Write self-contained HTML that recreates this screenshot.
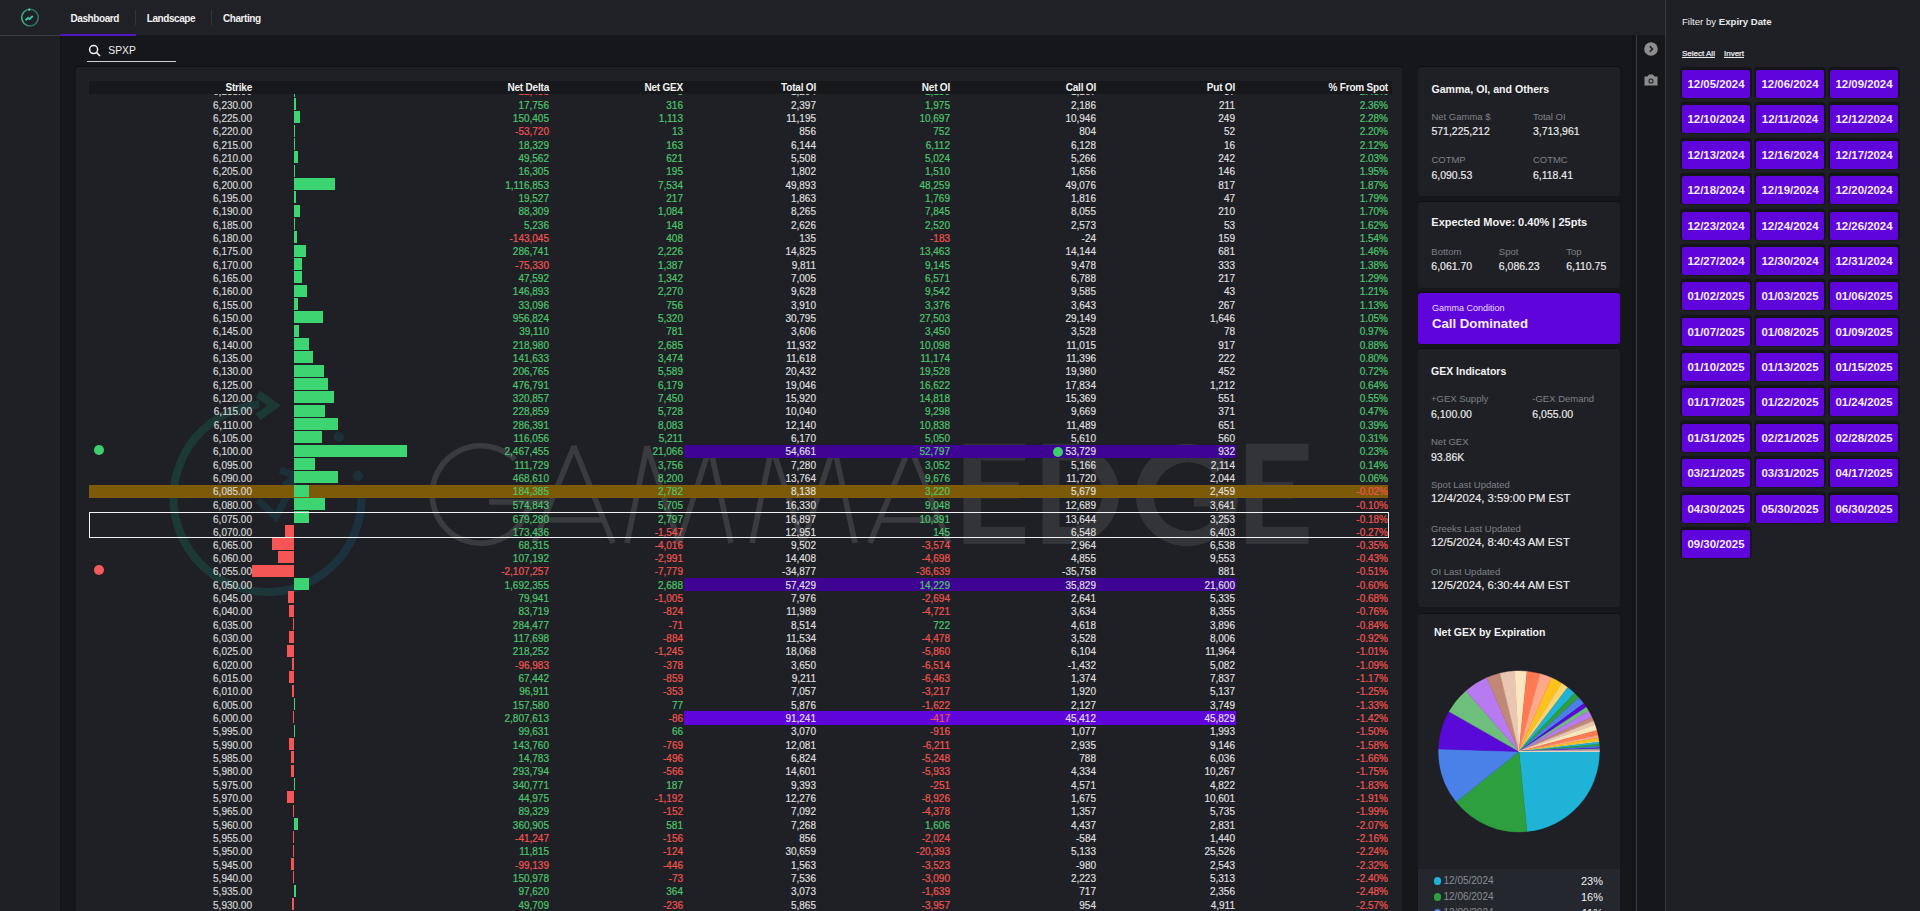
<!DOCTYPE html>
<html><head><meta charset="utf-8">
<style>
*{box-sizing:border-box;margin:0;padding:0}
html,body{width:1920px;height:911px;overflow:hidden;background:#16171b;font-family:'Liberation Sans', sans-serif;}
.a{position:absolute}
.t{position:absolute;white-space:nowrap;line-height:1}
.r{position:absolute;white-space:nowrap;text-align:right;-webkit-text-stroke:0.2px currentColor}
.btn{position:absolute;width:68px;height:28px;background:#5f05dc;border-radius:2px;color:#f4ecff;font-size:11.4px;font-weight:bold;text-align:center;line-height:28px;box-shadow:0 -1.4px 0 1.8px #141519}
</style></head><body>

<div class="a" style="left:0;top:0;width:1665px;height:35px;background:#202126"></div>
<div class="a" style="left:0;top:35px;width:60px;height:876px;background:#1f2025"></div>
<div class="a" style="left:0;top:35px;width:60px;height:1px;background:#3c3d42"></div>
<div class="a" style="left:60px;top:36px;width:2px;height:875px;background:#131418"></div>
<div class="a" style="left:60px;top:33.8px;width:76px;height:2px;background:#4f17bc"></div>
<svg class="a" style="left:18px;top:6px" width="24" height="24" viewBox="0 0 24 24">
<defs><linearGradient id="lg" x1="0" y1="0" x2="1" y2="0"><stop offset="0" stop-color="#3bbf86"/><stop offset="0.55" stop-color="#1f7a5e"/><stop offset="1" stop-color="#3e6f78"/></linearGradient></defs>
<circle cx="12" cy="11.6" r="8.3" fill="none" stroke="url(#lg)" stroke-width="1.5"/>
<path d="M7.5 14.2 L10 12 L11.5 13 L14.8 10" fill="none" stroke="#3fc2a0" stroke-width="1.9"/>
<circle cx="11.3" cy="3.7" r="1.1" fill="#5fd3a8"/>
</svg>
<div class="t" style="left:70.50px;top:13.54px;font-size:10px;font-weight:bold;color:#f0f0f0;letter-spacing:-0.42px">Dashboard</div>
<div class="a" style="left:135px;top:10px;width:1px;height:15px;background:#34353a"></div>
<div class="t" style="left:146.70px;top:13.54px;font-size:10px;font-weight:bold;color:#f0f0f0;letter-spacing:-0.42px">Landscape</div>
<div class="a" style="left:211px;top:10px;width:1px;height:15px;background:#34353a"></div>
<div class="t" style="left:222.90px;top:13.54px;font-size:10px;font-weight:bold;color:#f0f0f0;letter-spacing:-0.42px">Charting</div>
<svg class="a" style="left:88px;top:44px" width="14" height="14" viewBox="0 0 14 14">
<circle cx="5.6" cy="5.6" r="4" fill="none" stroke="#f0f0f0" stroke-width="1.5"/>
<path d="M8.5 8.5 L12 12" stroke="#f0f0f0" stroke-width="1.6"/>
</svg>
<div class="t" style="left:108.30px;top:46.08px;font-size:10.3px;color:#f0f0f0">SPXP</div>
<div class="a" style="left:86.5px;top:60.5px;width:89.5px;height:1.5px;background:#cfcfcf"></div>
<div class="a" style="left:76px;top:67px;width:1326px;height:860px;background:#1f2025;border-radius:3px;box-shadow:0 -1px 1px rgba(0,0,0,.35)"></div>
<svg class="a" style="left:0;top:0" width="1920" height="911" viewBox="0 0 1920 911"><defs><linearGradient id="rg" x1="0" y1="0" x2="1" y2="0"><stop offset="0" stop-color="#1c3a33"/><stop offset="1" stop-color="#1c3140"/></linearGradient></defs><path d="M 259.3 404.4 A 94 94 0 1 0 361.3 491.4" fill="none" stroke="url(#rg)" stroke-width="8"/><path d="M 258 394 L 274 405.5 L 258 417" fill="none" stroke="#1c3a33" stroke-width="8" stroke-linejoin="miter"/><circle cx="338.7" cy="437" r="5" fill="#1c3038"/><circle cx="358" cy="475.6" r="5.2" fill="#1c3038"/><path d="M 258 500 L 276 517 L 294 482 M 280 470 L 296 476 L 284 486" fill="none" stroke="#1c3038" stroke-width="7"/><path d="M 514.9 459.4 A 48.8 48.8 0 1 0 529.2 502.1 M 549 502 L 489 502" fill="none" stroke="#3a3b3f" stroke-width="5.6"/><path d="M 534 543 L 574 446.5 L 613 543 M 543 520 L 604 520" fill="none" stroke="#3a3b3f" stroke-width="5.6" stroke-linejoin="bevel"/><path d="M 627 543 L 647 446.5 L 679 543 L 710 446.5 L 731 543" fill="none" stroke="#3a3b3f" stroke-width="5.6" stroke-linejoin="bevel"/><path d="M 752 543 L 772 446.5 L 803 543 L 834 446.5 L 855 543" fill="none" stroke="#3a3b3f" stroke-width="5.6" stroke-linejoin="bevel"/><path d="M 870 543 L 910 446.5 L 949 543 M 879 520 L 940 520" fill="none" stroke="#3a3b3f" stroke-width="5.6" stroke-linejoin="bevel"/><path d="M 963.5 443.7 H 1025 V 460.5 H 981 V 482 H 1019 V 498.6 H 981 V 527 H 1025 V 544 H 963.5 Z" fill="#333438"/><path d="M 1042.5 443.7 H 1069 A 50.15 50.15 0 0 1 1069 544 H 1042.5 Z M 1059.5 460.5 V 527 H 1069 A 33.25 33.25 0 0 0 1069 460.5 Z" fill="#333438" fill-rule="evenodd"/><path d="M 1227.3 463.5 A 51.2 51.2 0 1 0 1237.9 500.4 L 1237.9 490 L 1194 490 L 1194 506.5 L 1221.1 506.5 A 34.3 34.3 0 1 1 1214.0 473.9 Z" fill="#333438"/><path d="M 1245.8 443.7 H 1308.5 V 460.5 H 1262.5 V 482 H 1293 V 498.6 H 1262.5 V 527 H 1308.5 V 544 H 1245.8 Z" fill="#333438"/></svg>
<div class="a" style="left:89px;top:80.5px;width:1303px;height:13.5px;background:#17181b"></div>
<div class="t" style="right:1668.00px;top:82.73px;font-size:10px;font-weight:bold;color:#f0f0f0;letter-spacing:-0.2px">Strike</div>
<div class="t" style="right:1371.00px;top:82.73px;font-size:10px;font-weight:bold;color:#f0f0f0;letter-spacing:-0.2px">Net Delta</div>
<div class="t" style="right:1237.00px;top:82.73px;font-size:10px;font-weight:bold;color:#f0f0f0;letter-spacing:-0.2px">Net GEX</div>
<div class="t" style="right:1104.00px;top:82.73px;font-size:10px;font-weight:bold;color:#f0f0f0;letter-spacing:-0.2px">Total OI</div>
<div class="t" style="right:970.00px;top:82.73px;font-size:10px;font-weight:bold;color:#f0f0f0;letter-spacing:-0.2px">Net OI</div>
<div class="t" style="right:824.00px;top:82.73px;font-size:10px;font-weight:bold;color:#f0f0f0;letter-spacing:-0.2px">Call OI</div>
<div class="t" style="right:685.00px;top:82.73px;font-size:10px;font-weight:bold;color:#f0f0f0;letter-spacing:-0.2px">Put OI</div>
<div class="t" style="right:532.00px;top:82.73px;font-size:10px;font-weight:bold;color:#f0f0f0;letter-spacing:-0.2px">% From Spot</div>
<div class="a" style="left:76px;top:94px;width:1325px;height:817px;overflow:hidden">
<div class="a" style="left:218px;top:-9.33px;width:1.00px;height:12.1px;background:#3dd572"></div>
<div class="r" style="right:1149px;top:-8.73px;height:13.333px;line-height:13.333px;font-size:10px;color:#d4d4d4">6,235.00</div>
<div class="r" style="right:852px;top:-8.73px;height:13.333px;line-height:13.333px;font-size:10px;color:#ef5350">-12,488</div>
<div class="r" style="right:718px;top:-8.73px;height:13.333px;line-height:13.333px;font-size:10px;color:#4cc56d">5</div>
<div class="r" style="right:585px;top:-8.73px;height:13.333px;line-height:13.333px;font-size:10px;color:#dedede">1,204</div>
<div class="r" style="right:451px;top:-8.73px;height:13.333px;line-height:13.333px;font-size:10px;color:#4cc56d">1,130</div>
<div class="r" style="right:305px;top:-8.73px;height:13.333px;line-height:13.333px;font-size:10px;color:#dedede">1,167</div>
<div class="r" style="right:166px;top:-8.73px;height:13.333px;line-height:13.333px;font-size:10px;color:#dedede">37</div>
<div class="r" style="right:13px;top:-8.73px;height:13.333px;line-height:13.333px;font-size:10px;color:#4cc56d">2.45%</div>
<div class="a" style="left:218px;top:4.00px;width:2.09px;height:12.1px;background:#3dd572"></div>
<div class="r" style="right:1149px;top:4.60px;height:13.333px;line-height:13.333px;font-size:10px;color:#d4d4d4">6,230.00</div>
<div class="r" style="right:852px;top:4.60px;height:13.333px;line-height:13.333px;font-size:10px;color:#4cc56d">17,756</div>
<div class="r" style="right:718px;top:4.60px;height:13.333px;line-height:13.333px;font-size:10px;color:#4cc56d">316</div>
<div class="r" style="right:585px;top:4.60px;height:13.333px;line-height:13.333px;font-size:10px;color:#dedede">2,397</div>
<div class="r" style="right:451px;top:4.60px;height:13.333px;line-height:13.333px;font-size:10px;color:#4cc56d">1,975</div>
<div class="r" style="right:305px;top:4.60px;height:13.333px;line-height:13.333px;font-size:10px;color:#dedede">2,186</div>
<div class="r" style="right:166px;top:4.60px;height:13.333px;line-height:13.333px;font-size:10px;color:#dedede">211</div>
<div class="r" style="right:13px;top:4.60px;height:13.333px;line-height:13.333px;font-size:10px;color:#4cc56d">2.36%</div>
<div class="a" style="left:218px;top:17.33px;width:6.37px;height:12.1px;background:#3dd572"></div>
<div class="r" style="right:1149px;top:17.93px;height:13.333px;line-height:13.333px;font-size:10px;color:#d4d4d4">6,225.00</div>
<div class="r" style="right:852px;top:17.93px;height:13.333px;line-height:13.333px;font-size:10px;color:#4cc56d">150,405</div>
<div class="r" style="right:718px;top:17.93px;height:13.333px;line-height:13.333px;font-size:10px;color:#4cc56d">1,113</div>
<div class="r" style="right:585px;top:17.93px;height:13.333px;line-height:13.333px;font-size:10px;color:#dedede">11,195</div>
<div class="r" style="right:451px;top:17.93px;height:13.333px;line-height:13.333px;font-size:10px;color:#4cc56d">10,697</div>
<div class="r" style="right:305px;top:17.93px;height:13.333px;line-height:13.333px;font-size:10px;color:#dedede">10,946</div>
<div class="r" style="right:166px;top:17.93px;height:13.333px;line-height:13.333px;font-size:10px;color:#dedede">249</div>
<div class="r" style="right:13px;top:17.93px;height:13.333px;line-height:13.333px;font-size:10px;color:#4cc56d">2.28%</div>
<div class="a" style="left:218px;top:30.67px;width:1.00px;height:12.1px;background:#3dd572"></div>
<div class="r" style="right:1149px;top:31.27px;height:13.333px;line-height:13.333px;font-size:10px;color:#d4d4d4">6,220.00</div>
<div class="r" style="right:852px;top:31.27px;height:13.333px;line-height:13.333px;font-size:10px;color:#ef5350">-53,720</div>
<div class="r" style="right:718px;top:31.27px;height:13.333px;line-height:13.333px;font-size:10px;color:#4cc56d">13</div>
<div class="r" style="right:585px;top:31.27px;height:13.333px;line-height:13.333px;font-size:10px;color:#dedede">856</div>
<div class="r" style="right:451px;top:31.27px;height:13.333px;line-height:13.333px;font-size:10px;color:#4cc56d">752</div>
<div class="r" style="right:305px;top:31.27px;height:13.333px;line-height:13.333px;font-size:10px;color:#dedede">804</div>
<div class="r" style="right:166px;top:31.27px;height:13.333px;line-height:13.333px;font-size:10px;color:#dedede">52</div>
<div class="r" style="right:13px;top:31.27px;height:13.333px;line-height:13.333px;font-size:10px;color:#4cc56d">2.20%</div>
<div class="a" style="left:218px;top:44.00px;width:1.27px;height:12.1px;background:#3dd572"></div>
<div class="r" style="right:1149px;top:44.60px;height:13.333px;line-height:13.333px;font-size:10px;color:#d4d4d4">6,215.00</div>
<div class="r" style="right:852px;top:44.60px;height:13.333px;line-height:13.333px;font-size:10px;color:#4cc56d">18,329</div>
<div class="r" style="right:718px;top:44.60px;height:13.333px;line-height:13.333px;font-size:10px;color:#4cc56d">163</div>
<div class="r" style="right:585px;top:44.60px;height:13.333px;line-height:13.333px;font-size:10px;color:#dedede">6,144</div>
<div class="r" style="right:451px;top:44.60px;height:13.333px;line-height:13.333px;font-size:10px;color:#4cc56d">6,112</div>
<div class="r" style="right:305px;top:44.60px;height:13.333px;line-height:13.333px;font-size:10px;color:#dedede">6,128</div>
<div class="r" style="right:166px;top:44.60px;height:13.333px;line-height:13.333px;font-size:10px;color:#dedede">16</div>
<div class="r" style="right:13px;top:44.60px;height:13.333px;line-height:13.333px;font-size:10px;color:#4cc56d">2.12%</div>
<div class="a" style="left:218px;top:57.33px;width:3.73px;height:12.1px;background:#3dd572"></div>
<div class="r" style="right:1149px;top:57.93px;height:13.333px;line-height:13.333px;font-size:10px;color:#d4d4d4">6,210.00</div>
<div class="r" style="right:852px;top:57.93px;height:13.333px;line-height:13.333px;font-size:10px;color:#4cc56d">49,562</div>
<div class="r" style="right:718px;top:57.93px;height:13.333px;line-height:13.333px;font-size:10px;color:#4cc56d">621</div>
<div class="r" style="right:585px;top:57.93px;height:13.333px;line-height:13.333px;font-size:10px;color:#dedede">5,508</div>
<div class="r" style="right:451px;top:57.93px;height:13.333px;line-height:13.333px;font-size:10px;color:#4cc56d">5,024</div>
<div class="r" style="right:305px;top:57.93px;height:13.333px;line-height:13.333px;font-size:10px;color:#dedede">5,266</div>
<div class="r" style="right:166px;top:57.93px;height:13.333px;line-height:13.333px;font-size:10px;color:#dedede">242</div>
<div class="r" style="right:13px;top:57.93px;height:13.333px;line-height:13.333px;font-size:10px;color:#4cc56d">2.03%</div>
<div class="a" style="left:218px;top:70.66px;width:1.45px;height:12.1px;background:#3dd572"></div>
<div class="r" style="right:1149px;top:71.26px;height:13.333px;line-height:13.333px;font-size:10px;color:#d4d4d4">6,205.00</div>
<div class="r" style="right:852px;top:71.26px;height:13.333px;line-height:13.333px;font-size:10px;color:#4cc56d">16,305</div>
<div class="r" style="right:718px;top:71.26px;height:13.333px;line-height:13.333px;font-size:10px;color:#4cc56d">195</div>
<div class="r" style="right:585px;top:71.26px;height:13.333px;line-height:13.333px;font-size:10px;color:#dedede">1,802</div>
<div class="r" style="right:451px;top:71.26px;height:13.333px;line-height:13.333px;font-size:10px;color:#4cc56d">1,510</div>
<div class="r" style="right:305px;top:71.26px;height:13.333px;line-height:13.333px;font-size:10px;color:#dedede">1,656</div>
<div class="r" style="right:166px;top:71.26px;height:13.333px;line-height:13.333px;font-size:10px;color:#dedede">146</div>
<div class="r" style="right:13px;top:71.26px;height:13.333px;line-height:13.333px;font-size:10px;color:#4cc56d">1.95%</div>
<div class="a" style="left:218px;top:84.00px;width:40.78px;height:12.1px;background:#3dd572"></div>
<div class="r" style="right:1149px;top:84.60px;height:13.333px;line-height:13.333px;font-size:10px;color:#d4d4d4">6,200.00</div>
<div class="r" style="right:852px;top:84.60px;height:13.333px;line-height:13.333px;font-size:10px;color:#4cc56d">1,116,853</div>
<div class="r" style="right:718px;top:84.60px;height:13.333px;line-height:13.333px;font-size:10px;color:#4cc56d">7,534</div>
<div class="r" style="right:585px;top:84.60px;height:13.333px;line-height:13.333px;font-size:10px;color:#dedede">49,893</div>
<div class="r" style="right:451px;top:84.60px;height:13.333px;line-height:13.333px;font-size:10px;color:#4cc56d">48,259</div>
<div class="r" style="right:305px;top:84.60px;height:13.333px;line-height:13.333px;font-size:10px;color:#dedede">49,076</div>
<div class="r" style="right:166px;top:84.60px;height:13.333px;line-height:13.333px;font-size:10px;color:#dedede">817</div>
<div class="r" style="right:13px;top:84.60px;height:13.333px;line-height:13.333px;font-size:10px;color:#4cc56d">1.87%</div>
<div class="a" style="left:218px;top:97.33px;width:1.56px;height:12.1px;background:#3dd572"></div>
<div class="r" style="right:1149px;top:97.93px;height:13.333px;line-height:13.333px;font-size:10px;color:#d4d4d4">6,195.00</div>
<div class="r" style="right:852px;top:97.93px;height:13.333px;line-height:13.333px;font-size:10px;color:#4cc56d">19,527</div>
<div class="r" style="right:718px;top:97.93px;height:13.333px;line-height:13.333px;font-size:10px;color:#4cc56d">217</div>
<div class="r" style="right:585px;top:97.93px;height:13.333px;line-height:13.333px;font-size:10px;color:#dedede">1,863</div>
<div class="r" style="right:451px;top:97.93px;height:13.333px;line-height:13.333px;font-size:10px;color:#4cc56d">1,769</div>
<div class="r" style="right:305px;top:97.93px;height:13.333px;line-height:13.333px;font-size:10px;color:#dedede">1,816</div>
<div class="r" style="right:166px;top:97.93px;height:13.333px;line-height:13.333px;font-size:10px;color:#dedede">47</div>
<div class="r" style="right:13px;top:97.93px;height:13.333px;line-height:13.333px;font-size:10px;color:#4cc56d">1.79%</div>
<div class="a" style="left:218px;top:110.66px;width:6.21px;height:12.1px;background:#3dd572"></div>
<div class="r" style="right:1149px;top:111.26px;height:13.333px;line-height:13.333px;font-size:10px;color:#d4d4d4">6,190.00</div>
<div class="r" style="right:852px;top:111.26px;height:13.333px;line-height:13.333px;font-size:10px;color:#4cc56d">88,309</div>
<div class="r" style="right:718px;top:111.26px;height:13.333px;line-height:13.333px;font-size:10px;color:#4cc56d">1,084</div>
<div class="r" style="right:585px;top:111.26px;height:13.333px;line-height:13.333px;font-size:10px;color:#dedede">8,265</div>
<div class="r" style="right:451px;top:111.26px;height:13.333px;line-height:13.333px;font-size:10px;color:#4cc56d">7,845</div>
<div class="r" style="right:305px;top:111.26px;height:13.333px;line-height:13.333px;font-size:10px;color:#dedede">8,055</div>
<div class="r" style="right:166px;top:111.26px;height:13.333px;line-height:13.333px;font-size:10px;color:#dedede">210</div>
<div class="r" style="right:13px;top:111.26px;height:13.333px;line-height:13.333px;font-size:10px;color:#4cc56d">1.70%</div>
<div class="a" style="left:218px;top:124.00px;width:1.19px;height:12.1px;background:#3dd572"></div>
<div class="r" style="right:1149px;top:124.60px;height:13.333px;line-height:13.333px;font-size:10px;color:#d4d4d4">6,185.00</div>
<div class="r" style="right:852px;top:124.60px;height:13.333px;line-height:13.333px;font-size:10px;color:#4cc56d">5,236</div>
<div class="r" style="right:718px;top:124.60px;height:13.333px;line-height:13.333px;font-size:10px;color:#4cc56d">148</div>
<div class="r" style="right:585px;top:124.60px;height:13.333px;line-height:13.333px;font-size:10px;color:#dedede">2,626</div>
<div class="r" style="right:451px;top:124.60px;height:13.333px;line-height:13.333px;font-size:10px;color:#4cc56d">2,520</div>
<div class="r" style="right:305px;top:124.60px;height:13.333px;line-height:13.333px;font-size:10px;color:#dedede">2,573</div>
<div class="r" style="right:166px;top:124.60px;height:13.333px;line-height:13.333px;font-size:10px;color:#dedede">53</div>
<div class="r" style="right:13px;top:124.60px;height:13.333px;line-height:13.333px;font-size:10px;color:#4cc56d">1.62%</div>
<div class="a" style="left:218px;top:137.33px;width:2.59px;height:12.1px;background:#3dd572"></div>
<div class="r" style="right:1149px;top:137.93px;height:13.333px;line-height:13.333px;font-size:10px;color:#d4d4d4">6,180.00</div>
<div class="r" style="right:852px;top:137.93px;height:13.333px;line-height:13.333px;font-size:10px;color:#ef5350">-143,045</div>
<div class="r" style="right:718px;top:137.93px;height:13.333px;line-height:13.333px;font-size:10px;color:#4cc56d">408</div>
<div class="r" style="right:585px;top:137.93px;height:13.333px;line-height:13.333px;font-size:10px;color:#dedede">135</div>
<div class="r" style="right:451px;top:137.93px;height:13.333px;line-height:13.333px;font-size:10px;color:#ef5350">-183</div>
<div class="r" style="right:305px;top:137.93px;height:13.333px;line-height:13.333px;font-size:10px;color:#dedede">-24</div>
<div class="r" style="right:166px;top:137.93px;height:13.333px;line-height:13.333px;font-size:10px;color:#dedede">159</div>
<div class="r" style="right:13px;top:137.93px;height:13.333px;line-height:13.333px;font-size:10px;color:#4cc56d">1.54%</div>
<div class="a" style="left:218px;top:150.66px;width:12.33px;height:12.1px;background:#3dd572"></div>
<div class="r" style="right:1149px;top:151.26px;height:13.333px;line-height:13.333px;font-size:10px;color:#d4d4d4">6,175.00</div>
<div class="r" style="right:852px;top:151.26px;height:13.333px;line-height:13.333px;font-size:10px;color:#4cc56d">286,741</div>
<div class="r" style="right:718px;top:151.26px;height:13.333px;line-height:13.333px;font-size:10px;color:#4cc56d">2,226</div>
<div class="r" style="right:585px;top:151.26px;height:13.333px;line-height:13.333px;font-size:10px;color:#dedede">14,825</div>
<div class="r" style="right:451px;top:151.26px;height:13.333px;line-height:13.333px;font-size:10px;color:#4cc56d">13,463</div>
<div class="r" style="right:305px;top:151.26px;height:13.333px;line-height:13.333px;font-size:10px;color:#dedede">14,144</div>
<div class="r" style="right:166px;top:151.26px;height:13.333px;line-height:13.333px;font-size:10px;color:#dedede">681</div>
<div class="r" style="right:13px;top:151.26px;height:13.333px;line-height:13.333px;font-size:10px;color:#4cc56d">1.46%</div>
<div class="a" style="left:218px;top:164.00px;width:7.83px;height:12.1px;background:#3dd572"></div>
<div class="r" style="right:1149px;top:164.60px;height:13.333px;line-height:13.333px;font-size:10px;color:#d4d4d4">6,170.00</div>
<div class="r" style="right:852px;top:164.60px;height:13.333px;line-height:13.333px;font-size:10px;color:#ef5350">-75,330</div>
<div class="r" style="right:718px;top:164.60px;height:13.333px;line-height:13.333px;font-size:10px;color:#4cc56d">1,387</div>
<div class="r" style="right:585px;top:164.60px;height:13.333px;line-height:13.333px;font-size:10px;color:#dedede">9,811</div>
<div class="r" style="right:451px;top:164.60px;height:13.333px;line-height:13.333px;font-size:10px;color:#4cc56d">9,145</div>
<div class="r" style="right:305px;top:164.60px;height:13.333px;line-height:13.333px;font-size:10px;color:#dedede">9,478</div>
<div class="r" style="right:166px;top:164.60px;height:13.333px;line-height:13.333px;font-size:10px;color:#dedede">333</div>
<div class="r" style="right:13px;top:164.60px;height:13.333px;line-height:13.333px;font-size:10px;color:#4cc56d">1.38%</div>
<div class="a" style="left:218px;top:177.33px;width:7.59px;height:12.1px;background:#3dd572"></div>
<div class="r" style="right:1149px;top:177.93px;height:13.333px;line-height:13.333px;font-size:10px;color:#d4d4d4">6,165.00</div>
<div class="r" style="right:852px;top:177.93px;height:13.333px;line-height:13.333px;font-size:10px;color:#4cc56d">47,592</div>
<div class="r" style="right:718px;top:177.93px;height:13.333px;line-height:13.333px;font-size:10px;color:#4cc56d">1,342</div>
<div class="r" style="right:585px;top:177.93px;height:13.333px;line-height:13.333px;font-size:10px;color:#dedede">7,005</div>
<div class="r" style="right:451px;top:177.93px;height:13.333px;line-height:13.333px;font-size:10px;color:#4cc56d">6,571</div>
<div class="r" style="right:305px;top:177.93px;height:13.333px;line-height:13.333px;font-size:10px;color:#dedede">6,788</div>
<div class="r" style="right:166px;top:177.93px;height:13.333px;line-height:13.333px;font-size:10px;color:#dedede">217</div>
<div class="r" style="right:13px;top:177.93px;height:13.333px;line-height:13.333px;font-size:10px;color:#4cc56d">1.29%</div>
<div class="a" style="left:218px;top:190.66px;width:12.57px;height:12.1px;background:#3dd572"></div>
<div class="r" style="right:1149px;top:191.26px;height:13.333px;line-height:13.333px;font-size:10px;color:#d4d4d4">6,160.00</div>
<div class="r" style="right:852px;top:191.26px;height:13.333px;line-height:13.333px;font-size:10px;color:#4cc56d">146,893</div>
<div class="r" style="right:718px;top:191.26px;height:13.333px;line-height:13.333px;font-size:10px;color:#4cc56d">2,270</div>
<div class="r" style="right:585px;top:191.26px;height:13.333px;line-height:13.333px;font-size:10px;color:#dedede">9,628</div>
<div class="r" style="right:451px;top:191.26px;height:13.333px;line-height:13.333px;font-size:10px;color:#4cc56d">9,542</div>
<div class="r" style="right:305px;top:191.26px;height:13.333px;line-height:13.333px;font-size:10px;color:#dedede">9,585</div>
<div class="r" style="right:166px;top:191.26px;height:13.333px;line-height:13.333px;font-size:10px;color:#dedede">43</div>
<div class="r" style="right:13px;top:191.26px;height:13.333px;line-height:13.333px;font-size:10px;color:#4cc56d">1.21%</div>
<div class="a" style="left:218px;top:204.00px;width:4.45px;height:12.1px;background:#3dd572"></div>
<div class="r" style="right:1149px;top:204.60px;height:13.333px;line-height:13.333px;font-size:10px;color:#d4d4d4">6,155.00</div>
<div class="r" style="right:852px;top:204.60px;height:13.333px;line-height:13.333px;font-size:10px;color:#4cc56d">33,096</div>
<div class="r" style="right:718px;top:204.60px;height:13.333px;line-height:13.333px;font-size:10px;color:#4cc56d">756</div>
<div class="r" style="right:585px;top:204.60px;height:13.333px;line-height:13.333px;font-size:10px;color:#dedede">3,910</div>
<div class="r" style="right:451px;top:204.60px;height:13.333px;line-height:13.333px;font-size:10px;color:#4cc56d">3,376</div>
<div class="r" style="right:305px;top:204.60px;height:13.333px;line-height:13.333px;font-size:10px;color:#dedede">3,643</div>
<div class="r" style="right:166px;top:204.60px;height:13.333px;line-height:13.333px;font-size:10px;color:#dedede">267</div>
<div class="r" style="right:13px;top:204.60px;height:13.333px;line-height:13.333px;font-size:10px;color:#4cc56d">1.13%</div>
<div class="a" style="left:218px;top:217.33px;width:28.92px;height:12.1px;background:#3dd572"></div>
<div class="r" style="right:1149px;top:217.93px;height:13.333px;line-height:13.333px;font-size:10px;color:#d4d4d4">6,150.00</div>
<div class="r" style="right:852px;top:217.93px;height:13.333px;line-height:13.333px;font-size:10px;color:#4cc56d">956,824</div>
<div class="r" style="right:718px;top:217.93px;height:13.333px;line-height:13.333px;font-size:10px;color:#4cc56d">5,320</div>
<div class="r" style="right:585px;top:217.93px;height:13.333px;line-height:13.333px;font-size:10px;color:#dedede">30,795</div>
<div class="r" style="right:451px;top:217.93px;height:13.333px;line-height:13.333px;font-size:10px;color:#4cc56d">27,503</div>
<div class="r" style="right:305px;top:217.93px;height:13.333px;line-height:13.333px;font-size:10px;color:#dedede">29,149</div>
<div class="r" style="right:166px;top:217.93px;height:13.333px;line-height:13.333px;font-size:10px;color:#dedede">1,646</div>
<div class="r" style="right:13px;top:217.93px;height:13.333px;line-height:13.333px;font-size:10px;color:#4cc56d">1.05%</div>
<div class="a" style="left:218px;top:230.66px;width:4.59px;height:12.1px;background:#3dd572"></div>
<div class="r" style="right:1149px;top:231.26px;height:13.333px;line-height:13.333px;font-size:10px;color:#d4d4d4">6,145.00</div>
<div class="r" style="right:852px;top:231.26px;height:13.333px;line-height:13.333px;font-size:10px;color:#4cc56d">39,110</div>
<div class="r" style="right:718px;top:231.26px;height:13.333px;line-height:13.333px;font-size:10px;color:#4cc56d">781</div>
<div class="r" style="right:585px;top:231.26px;height:13.333px;line-height:13.333px;font-size:10px;color:#dedede">3,606</div>
<div class="r" style="right:451px;top:231.26px;height:13.333px;line-height:13.333px;font-size:10px;color:#4cc56d">3,450</div>
<div class="r" style="right:305px;top:231.26px;height:13.333px;line-height:13.333px;font-size:10px;color:#dedede">3,528</div>
<div class="r" style="right:166px;top:231.26px;height:13.333px;line-height:13.333px;font-size:10px;color:#dedede">78</div>
<div class="r" style="right:13px;top:231.26px;height:13.333px;line-height:13.333px;font-size:10px;color:#4cc56d">0.97%</div>
<div class="a" style="left:218px;top:243.99px;width:14.79px;height:12.1px;background:#3dd572"></div>
<div class="r" style="right:1149px;top:244.59px;height:13.333px;line-height:13.333px;font-size:10px;color:#d4d4d4">6,140.00</div>
<div class="r" style="right:852px;top:244.59px;height:13.333px;line-height:13.333px;font-size:10px;color:#4cc56d">218,980</div>
<div class="r" style="right:718px;top:244.59px;height:13.333px;line-height:13.333px;font-size:10px;color:#4cc56d">2,685</div>
<div class="r" style="right:585px;top:244.59px;height:13.333px;line-height:13.333px;font-size:10px;color:#dedede">11,932</div>
<div class="r" style="right:451px;top:244.59px;height:13.333px;line-height:13.333px;font-size:10px;color:#4cc56d">10,098</div>
<div class="r" style="right:305px;top:244.59px;height:13.333px;line-height:13.333px;font-size:10px;color:#dedede">11,015</div>
<div class="r" style="right:166px;top:244.59px;height:13.333px;line-height:13.333px;font-size:10px;color:#dedede">917</div>
<div class="r" style="right:13px;top:244.59px;height:13.333px;line-height:13.333px;font-size:10px;color:#4cc56d">0.88%</div>
<div class="a" style="left:218px;top:257.33px;width:19.02px;height:12.1px;background:#3dd572"></div>
<div class="r" style="right:1149px;top:257.93px;height:13.333px;line-height:13.333px;font-size:10px;color:#d4d4d4">6,135.00</div>
<div class="r" style="right:852px;top:257.93px;height:13.333px;line-height:13.333px;font-size:10px;color:#4cc56d">141,633</div>
<div class="r" style="right:718px;top:257.93px;height:13.333px;line-height:13.333px;font-size:10px;color:#4cc56d">3,474</div>
<div class="r" style="right:585px;top:257.93px;height:13.333px;line-height:13.333px;font-size:10px;color:#dedede">11,618</div>
<div class="r" style="right:451px;top:257.93px;height:13.333px;line-height:13.333px;font-size:10px;color:#4cc56d">11,174</div>
<div class="r" style="right:305px;top:257.93px;height:13.333px;line-height:13.333px;font-size:10px;color:#dedede">11,396</div>
<div class="r" style="right:166px;top:257.93px;height:13.333px;line-height:13.333px;font-size:10px;color:#dedede">222</div>
<div class="r" style="right:13px;top:257.93px;height:13.333px;line-height:13.333px;font-size:10px;color:#4cc56d">0.80%</div>
<div class="a" style="left:218px;top:270.66px;width:30.36px;height:12.1px;background:#3dd572"></div>
<div class="r" style="right:1149px;top:271.26px;height:13.333px;line-height:13.333px;font-size:10px;color:#d4d4d4">6,130.00</div>
<div class="r" style="right:852px;top:271.26px;height:13.333px;line-height:13.333px;font-size:10px;color:#4cc56d">206,765</div>
<div class="r" style="right:718px;top:271.26px;height:13.333px;line-height:13.333px;font-size:10px;color:#4cc56d">5,589</div>
<div class="r" style="right:585px;top:271.26px;height:13.333px;line-height:13.333px;font-size:10px;color:#dedede">20,432</div>
<div class="r" style="right:451px;top:271.26px;height:13.333px;line-height:13.333px;font-size:10px;color:#4cc56d">19,528</div>
<div class="r" style="right:305px;top:271.26px;height:13.333px;line-height:13.333px;font-size:10px;color:#dedede">19,980</div>
<div class="r" style="right:166px;top:271.26px;height:13.333px;line-height:13.333px;font-size:10px;color:#dedede">452</div>
<div class="r" style="right:13px;top:271.26px;height:13.333px;line-height:13.333px;font-size:10px;color:#4cc56d">0.72%</div>
<div class="a" style="left:218px;top:283.99px;width:33.52px;height:12.1px;background:#3dd572"></div>
<div class="r" style="right:1149px;top:284.59px;height:13.333px;line-height:13.333px;font-size:10px;color:#d4d4d4">6,125.00</div>
<div class="r" style="right:852px;top:284.59px;height:13.333px;line-height:13.333px;font-size:10px;color:#4cc56d">476,791</div>
<div class="r" style="right:718px;top:284.59px;height:13.333px;line-height:13.333px;font-size:10px;color:#4cc56d">6,179</div>
<div class="r" style="right:585px;top:284.59px;height:13.333px;line-height:13.333px;font-size:10px;color:#dedede">19,046</div>
<div class="r" style="right:451px;top:284.59px;height:13.333px;line-height:13.333px;font-size:10px;color:#4cc56d">16,622</div>
<div class="r" style="right:305px;top:284.59px;height:13.333px;line-height:13.333px;font-size:10px;color:#dedede">17,834</div>
<div class="r" style="right:166px;top:284.59px;height:13.333px;line-height:13.333px;font-size:10px;color:#dedede">1,212</div>
<div class="r" style="right:13px;top:284.59px;height:13.333px;line-height:13.333px;font-size:10px;color:#4cc56d">0.64%</div>
<div class="a" style="left:218px;top:297.33px;width:40.33px;height:12.1px;background:#3dd572"></div>
<div class="r" style="right:1149px;top:297.93px;height:13.333px;line-height:13.333px;font-size:10px;color:#d4d4d4">6,120.00</div>
<div class="r" style="right:852px;top:297.93px;height:13.333px;line-height:13.333px;font-size:10px;color:#4cc56d">320,857</div>
<div class="r" style="right:718px;top:297.93px;height:13.333px;line-height:13.333px;font-size:10px;color:#4cc56d">7,450</div>
<div class="r" style="right:585px;top:297.93px;height:13.333px;line-height:13.333px;font-size:10px;color:#dedede">15,920</div>
<div class="r" style="right:451px;top:297.93px;height:13.333px;line-height:13.333px;font-size:10px;color:#4cc56d">14,818</div>
<div class="r" style="right:305px;top:297.93px;height:13.333px;line-height:13.333px;font-size:10px;color:#dedede">15,369</div>
<div class="r" style="right:166px;top:297.93px;height:13.333px;line-height:13.333px;font-size:10px;color:#dedede">551</div>
<div class="r" style="right:13px;top:297.93px;height:13.333px;line-height:13.333px;font-size:10px;color:#4cc56d">0.55%</div>
<div class="a" style="left:218px;top:310.66px;width:31.10px;height:12.1px;background:#3dd572"></div>
<div class="r" style="right:1149px;top:311.26px;height:13.333px;line-height:13.333px;font-size:10px;color:#d4d4d4">6,115.00</div>
<div class="r" style="right:852px;top:311.26px;height:13.333px;line-height:13.333px;font-size:10px;color:#4cc56d">228,859</div>
<div class="r" style="right:718px;top:311.26px;height:13.333px;line-height:13.333px;font-size:10px;color:#4cc56d">5,728</div>
<div class="r" style="right:585px;top:311.26px;height:13.333px;line-height:13.333px;font-size:10px;color:#dedede">10,040</div>
<div class="r" style="right:451px;top:311.26px;height:13.333px;line-height:13.333px;font-size:10px;color:#4cc56d">9,298</div>
<div class="r" style="right:305px;top:311.26px;height:13.333px;line-height:13.333px;font-size:10px;color:#dedede">9,669</div>
<div class="r" style="right:166px;top:311.26px;height:13.333px;line-height:13.333px;font-size:10px;color:#dedede">371</div>
<div class="r" style="right:13px;top:311.26px;height:13.333px;line-height:13.333px;font-size:10px;color:#4cc56d">0.47%</div>
<div class="a" style="left:218px;top:323.99px;width:43.72px;height:12.1px;background:#3dd572"></div>
<div class="r" style="right:1149px;top:324.59px;height:13.333px;line-height:13.333px;font-size:10px;color:#d4d4d4">6,110.00</div>
<div class="r" style="right:852px;top:324.59px;height:13.333px;line-height:13.333px;font-size:10px;color:#4cc56d">286,391</div>
<div class="r" style="right:718px;top:324.59px;height:13.333px;line-height:13.333px;font-size:10px;color:#4cc56d">8,083</div>
<div class="r" style="right:585px;top:324.59px;height:13.333px;line-height:13.333px;font-size:10px;color:#dedede">12,140</div>
<div class="r" style="right:451px;top:324.59px;height:13.333px;line-height:13.333px;font-size:10px;color:#4cc56d">10,838</div>
<div class="r" style="right:305px;top:324.59px;height:13.333px;line-height:13.333px;font-size:10px;color:#dedede">11,489</div>
<div class="r" style="right:166px;top:324.59px;height:13.333px;line-height:13.333px;font-size:10px;color:#dedede">651</div>
<div class="r" style="right:13px;top:324.59px;height:13.333px;line-height:13.333px;font-size:10px;color:#4cc56d">0.39%</div>
<div class="a" style="left:218px;top:337.32px;width:28.33px;height:12.1px;background:#3dd572"></div>
<div class="r" style="right:1149px;top:337.92px;height:13.333px;line-height:13.333px;font-size:10px;color:#d4d4d4">6,105.00</div>
<div class="r" style="right:852px;top:337.92px;height:13.333px;line-height:13.333px;font-size:10px;color:#4cc56d">116,056</div>
<div class="r" style="right:718px;top:337.92px;height:13.333px;line-height:13.333px;font-size:10px;color:#4cc56d">5,211</div>
<div class="r" style="right:585px;top:337.92px;height:13.333px;line-height:13.333px;font-size:10px;color:#dedede">6,170</div>
<div class="r" style="right:451px;top:337.92px;height:13.333px;line-height:13.333px;font-size:10px;color:#4cc56d">5,050</div>
<div class="r" style="right:305px;top:337.92px;height:13.333px;line-height:13.333px;font-size:10px;color:#dedede">5,610</div>
<div class="r" style="right:166px;top:337.92px;height:13.333px;line-height:13.333px;font-size:10px;color:#dedede">560</div>
<div class="r" style="right:13px;top:337.92px;height:13.333px;line-height:13.333px;font-size:10px;color:#4cc56d">0.31%</div>
<div class="a" style="left:608px;top:350.66px;width:552px;height:13.333px;background:#3f0494"></div>
<div class="a" style="left:218px;top:350.66px;width:113.31px;height:12.1px;background:#3dd572"></div>
<div class="r" style="right:1149px;top:351.26px;height:13.333px;line-height:13.333px;font-size:10px;color:#d4d4d4">6,100.00</div>
<div class="r" style="right:852px;top:351.26px;height:13.333px;line-height:13.333px;font-size:10px;color:#4cc56d">2,467,455</div>
<div class="r" style="right:718px;top:351.26px;height:13.333px;line-height:13.333px;font-size:10px;color:#4cc56d">21,066</div>
<div class="r" style="right:585px;top:351.26px;height:13.333px;line-height:13.333px;font-size:10px;color:#dedede">54,661</div>
<div class="r" style="right:451px;top:351.26px;height:13.333px;line-height:13.333px;font-size:10px;color:#4cc56d">52,797</div>
<div class="r" style="right:305px;top:351.26px;height:13.333px;line-height:13.333px;font-size:10px;color:#dedede">53,729</div>
<div class="r" style="right:166px;top:351.26px;height:13.333px;line-height:13.333px;font-size:10px;color:#dedede">932</div>
<div class="r" style="right:13px;top:351.26px;height:13.333px;line-height:13.333px;font-size:10px;color:#4cc56d">0.23%</div>
<div class="a" style="left:218px;top:363.99px;width:20.53px;height:12.1px;background:#3dd572"></div>
<div class="r" style="right:1149px;top:364.59px;height:13.333px;line-height:13.333px;font-size:10px;color:#d4d4d4">6,095.00</div>
<div class="r" style="right:852px;top:364.59px;height:13.333px;line-height:13.333px;font-size:10px;color:#4cc56d">111,729</div>
<div class="r" style="right:718px;top:364.59px;height:13.333px;line-height:13.333px;font-size:10px;color:#4cc56d">3,756</div>
<div class="r" style="right:585px;top:364.59px;height:13.333px;line-height:13.333px;font-size:10px;color:#dedede">7,280</div>
<div class="r" style="right:451px;top:364.59px;height:13.333px;line-height:13.333px;font-size:10px;color:#4cc56d">3,052</div>
<div class="r" style="right:305px;top:364.59px;height:13.333px;line-height:13.333px;font-size:10px;color:#dedede">5,166</div>
<div class="r" style="right:166px;top:364.59px;height:13.333px;line-height:13.333px;font-size:10px;color:#dedede">2,114</div>
<div class="r" style="right:13px;top:364.59px;height:13.333px;line-height:13.333px;font-size:10px;color:#4cc56d">0.14%</div>
<div class="a" style="left:218px;top:377.32px;width:44.35px;height:12.1px;background:#3dd572"></div>
<div class="r" style="right:1149px;top:377.92px;height:13.333px;line-height:13.333px;font-size:10px;color:#d4d4d4">6,090.00</div>
<div class="r" style="right:852px;top:377.92px;height:13.333px;line-height:13.333px;font-size:10px;color:#4cc56d">468,610</div>
<div class="r" style="right:718px;top:377.92px;height:13.333px;line-height:13.333px;font-size:10px;color:#4cc56d">8,200</div>
<div class="r" style="right:585px;top:377.92px;height:13.333px;line-height:13.333px;font-size:10px;color:#dedede">13,764</div>
<div class="r" style="right:451px;top:377.92px;height:13.333px;line-height:13.333px;font-size:10px;color:#4cc56d">9,676</div>
<div class="r" style="right:305px;top:377.92px;height:13.333px;line-height:13.333px;font-size:10px;color:#dedede">11,720</div>
<div class="r" style="right:166px;top:377.92px;height:13.333px;line-height:13.333px;font-size:10px;color:#dedede">2,044</div>
<div class="r" style="right:13px;top:377.92px;height:13.333px;line-height:13.333px;font-size:10px;color:#4cc56d">0.06%</div>
<div class="a" style="left:12.799999999999997px;top:390.96px;width:1299.2px;height:13px;background:#7d5a08"></div>
<div class="a" style="left:218px;top:390.66px;width:15.31px;height:12.1px;background:#3dd572"></div>
<div class="r" style="right:1149px;top:391.26px;height:13.333px;line-height:13.333px;font-size:10px;color:#d4d4d4">6,085.00</div>
<div class="r" style="right:852px;top:391.26px;height:13.333px;line-height:13.333px;font-size:10px;color:#4cc56d">184,385</div>
<div class="r" style="right:718px;top:391.26px;height:13.333px;line-height:13.333px;font-size:10px;color:#4cc56d">2,782</div>
<div class="r" style="right:585px;top:391.26px;height:13.333px;line-height:13.333px;font-size:10px;color:#dedede">8,138</div>
<div class="r" style="right:451px;top:391.26px;height:13.333px;line-height:13.333px;font-size:10px;color:#4cc56d">3,220</div>
<div class="r" style="right:305px;top:391.26px;height:13.333px;line-height:13.333px;font-size:10px;color:#dedede">5,679</div>
<div class="r" style="right:166px;top:391.26px;height:13.333px;line-height:13.333px;font-size:10px;color:#dedede">2,459</div>
<div class="r" style="right:13px;top:391.26px;height:13.333px;line-height:13.333px;font-size:10px;color:#ef5350">-0.02%</div>
<div class="a" style="left:218px;top:403.99px;width:30.98px;height:12.1px;background:#3dd572"></div>
<div class="r" style="right:1149px;top:404.59px;height:13.333px;line-height:13.333px;font-size:10px;color:#d4d4d4">6,080.00</div>
<div class="r" style="right:852px;top:404.59px;height:13.333px;line-height:13.333px;font-size:10px;color:#4cc56d">574,843</div>
<div class="r" style="right:718px;top:404.59px;height:13.333px;line-height:13.333px;font-size:10px;color:#4cc56d">5,705</div>
<div class="r" style="right:585px;top:404.59px;height:13.333px;line-height:13.333px;font-size:10px;color:#dedede">16,330</div>
<div class="r" style="right:451px;top:404.59px;height:13.333px;line-height:13.333px;font-size:10px;color:#4cc56d">9,048</div>
<div class="r" style="right:305px;top:404.59px;height:13.333px;line-height:13.333px;font-size:10px;color:#dedede">12,689</div>
<div class="r" style="right:166px;top:404.59px;height:13.333px;line-height:13.333px;font-size:10px;color:#dedede">3,641</div>
<div class="r" style="right:13px;top:404.59px;height:13.333px;line-height:13.333px;font-size:10px;color:#ef5350">-0.10%</div>
<div class="a" style="left:218px;top:417.32px;width:15.39px;height:12.1px;background:#3dd572"></div>
<div class="r" style="right:1149px;top:419.12px;height:13.333px;line-height:13.333px;font-size:10px;color:#d4d4d4">6,075.00</div>
<div class="r" style="right:852px;top:419.12px;height:13.333px;line-height:13.333px;font-size:10px;color:#4cc56d">679,280</div>
<div class="r" style="right:718px;top:419.12px;height:13.333px;line-height:13.333px;font-size:10px;color:#4cc56d">2,797</div>
<div class="r" style="right:585px;top:419.12px;height:13.333px;line-height:13.333px;font-size:10px;color:#dedede">16,897</div>
<div class="r" style="right:451px;top:419.12px;height:13.333px;line-height:13.333px;font-size:10px;color:#4cc56d">10,391</div>
<div class="r" style="right:305px;top:419.12px;height:13.333px;line-height:13.333px;font-size:10px;color:#dedede">13,644</div>
<div class="r" style="right:166px;top:419.12px;height:13.333px;line-height:13.333px;font-size:10px;color:#dedede">3,253</div>
<div class="r" style="right:13px;top:419.12px;height:13.333px;line-height:13.333px;font-size:10px;color:#ef5350">-0.18%</div>
<div class="a" style="left:209.31px;top:430.66px;width:8.69px;height:12.1px;background:#f45656"></div>
<div class="r" style="right:1149px;top:432.46px;height:13.333px;line-height:13.333px;font-size:10px;color:#d4d4d4">6,070.00</div>
<div class="r" style="right:852px;top:432.46px;height:13.333px;line-height:13.333px;font-size:10px;color:#4cc56d">173,436</div>
<div class="r" style="right:718px;top:432.46px;height:13.333px;line-height:13.333px;font-size:10px;color:#ef5350">-1,547</div>
<div class="r" style="right:585px;top:432.46px;height:13.333px;line-height:13.333px;font-size:10px;color:#dedede">12,951</div>
<div class="r" style="right:451px;top:432.46px;height:13.333px;line-height:13.333px;font-size:10px;color:#4cc56d">145</div>
<div class="r" style="right:305px;top:432.46px;height:13.333px;line-height:13.333px;font-size:10px;color:#dedede">6,548</div>
<div class="r" style="right:166px;top:432.46px;height:13.333px;line-height:13.333px;font-size:10px;color:#dedede">6,403</div>
<div class="r" style="right:13px;top:432.46px;height:13.333px;line-height:13.333px;font-size:10px;color:#ef5350">-0.27%</div>
<div class="a" style="left:196.07px;top:443.99px;width:21.93px;height:12.1px;background:#f45656"></div>
<div class="r" style="right:1149px;top:444.59px;height:13.333px;line-height:13.333px;font-size:10px;color:#d4d4d4">6,065.00</div>
<div class="r" style="right:852px;top:444.59px;height:13.333px;line-height:13.333px;font-size:10px;color:#4cc56d">68,315</div>
<div class="r" style="right:718px;top:444.59px;height:13.333px;line-height:13.333px;font-size:10px;color:#ef5350">-4,016</div>
<div class="r" style="right:585px;top:444.59px;height:13.333px;line-height:13.333px;font-size:10px;color:#dedede">9,502</div>
<div class="r" style="right:451px;top:444.59px;height:13.333px;line-height:13.333px;font-size:10px;color:#ef5350">-3,574</div>
<div class="r" style="right:305px;top:444.59px;height:13.333px;line-height:13.333px;font-size:10px;color:#dedede">2,964</div>
<div class="r" style="right:166px;top:444.59px;height:13.333px;line-height:13.333px;font-size:10px;color:#dedede">6,538</div>
<div class="r" style="right:13px;top:444.59px;height:13.333px;line-height:13.333px;font-size:10px;color:#ef5350">-0.35%</div>
<div class="a" style="left:201.57px;top:457.32px;width:16.43px;height:12.1px;background:#f45656"></div>
<div class="r" style="right:1149px;top:457.92px;height:13.333px;line-height:13.333px;font-size:10px;color:#d4d4d4">6,060.00</div>
<div class="r" style="right:852px;top:457.92px;height:13.333px;line-height:13.333px;font-size:10px;color:#4cc56d">107,192</div>
<div class="r" style="right:718px;top:457.92px;height:13.333px;line-height:13.333px;font-size:10px;color:#ef5350">-2,991</div>
<div class="r" style="right:585px;top:457.92px;height:13.333px;line-height:13.333px;font-size:10px;color:#dedede">14,408</div>
<div class="r" style="right:451px;top:457.92px;height:13.333px;line-height:13.333px;font-size:10px;color:#ef5350">-4,698</div>
<div class="r" style="right:305px;top:457.92px;height:13.333px;line-height:13.333px;font-size:10px;color:#dedede">4,855</div>
<div class="r" style="right:166px;top:457.92px;height:13.333px;line-height:13.333px;font-size:10px;color:#dedede">9,553</div>
<div class="r" style="right:13px;top:457.92px;height:13.333px;line-height:13.333px;font-size:10px;color:#ef5350">-0.43%</div>
<div class="a" style="left:175.90px;top:470.65px;width:42.10px;height:12.1px;background:#f45656"></div>
<div class="r" style="right:1149px;top:471.25px;height:13.333px;line-height:13.333px;font-size:10px;color:#d4d4d4">6,055.00</div>
<div class="r" style="right:852px;top:471.25px;height:13.333px;line-height:13.333px;font-size:10px;color:#ef5350">-2,107,257</div>
<div class="r" style="right:718px;top:471.25px;height:13.333px;line-height:13.333px;font-size:10px;color:#ef5350">-7,779</div>
<div class="r" style="right:585px;top:471.25px;height:13.333px;line-height:13.333px;font-size:10px;color:#dedede">-34,877</div>
<div class="r" style="right:451px;top:471.25px;height:13.333px;line-height:13.333px;font-size:10px;color:#ef5350">-36,639</div>
<div class="r" style="right:305px;top:471.25px;height:13.333px;line-height:13.333px;font-size:10px;color:#dedede">-35,758</div>
<div class="r" style="right:166px;top:471.25px;height:13.333px;line-height:13.333px;font-size:10px;color:#dedede">881</div>
<div class="r" style="right:13px;top:471.25px;height:13.333px;line-height:13.333px;font-size:10px;color:#ef5350">-0.51%</div>
<div class="a" style="left:608px;top:483.99px;width:552px;height:13.333px;background:#3f0494"></div>
<div class="a" style="left:218px;top:483.99px;width:14.81px;height:12.1px;background:#3dd572"></div>
<div class="r" style="right:1149px;top:484.59px;height:13.333px;line-height:13.333px;font-size:10px;color:#d4d4d4">6,050.00</div>
<div class="r" style="right:852px;top:484.59px;height:13.333px;line-height:13.333px;font-size:10px;color:#4cc56d">1,692,355</div>
<div class="r" style="right:718px;top:484.59px;height:13.333px;line-height:13.333px;font-size:10px;color:#4cc56d">2,688</div>
<div class="r" style="right:585px;top:484.59px;height:13.333px;line-height:13.333px;font-size:10px;color:#dedede">57,429</div>
<div class="r" style="right:451px;top:484.59px;height:13.333px;line-height:13.333px;font-size:10px;color:#4cc56d">14,229</div>
<div class="r" style="right:305px;top:484.59px;height:13.333px;line-height:13.333px;font-size:10px;color:#dedede">35,829</div>
<div class="r" style="right:166px;top:484.59px;height:13.333px;line-height:13.333px;font-size:10px;color:#dedede">21,600</div>
<div class="r" style="right:13px;top:484.59px;height:13.333px;line-height:13.333px;font-size:10px;color:#ef5350">-0.60%</div>
<div class="a" style="left:212.21px;top:497.32px;width:5.79px;height:12.1px;background:#f45656"></div>
<div class="r" style="right:1149px;top:497.92px;height:13.333px;line-height:13.333px;font-size:10px;color:#d4d4d4">6,045.00</div>
<div class="r" style="right:852px;top:497.92px;height:13.333px;line-height:13.333px;font-size:10px;color:#4cc56d">79,941</div>
<div class="r" style="right:718px;top:497.92px;height:13.333px;line-height:13.333px;font-size:10px;color:#ef5350">-1,005</div>
<div class="r" style="right:585px;top:497.92px;height:13.333px;line-height:13.333px;font-size:10px;color:#dedede">7,976</div>
<div class="r" style="right:451px;top:497.92px;height:13.333px;line-height:13.333px;font-size:10px;color:#ef5350">-2,694</div>
<div class="r" style="right:305px;top:497.92px;height:13.333px;line-height:13.333px;font-size:10px;color:#dedede">2,641</div>
<div class="r" style="right:166px;top:497.92px;height:13.333px;line-height:13.333px;font-size:10px;color:#dedede">5,335</div>
<div class="r" style="right:13px;top:497.92px;height:13.333px;line-height:13.333px;font-size:10px;color:#ef5350">-0.68%</div>
<div class="a" style="left:213.18px;top:510.65px;width:4.82px;height:12.1px;background:#f45656"></div>
<div class="r" style="right:1149px;top:511.25px;height:13.333px;line-height:13.333px;font-size:10px;color:#d4d4d4">6,040.00</div>
<div class="r" style="right:852px;top:511.25px;height:13.333px;line-height:13.333px;font-size:10px;color:#4cc56d">83,719</div>
<div class="r" style="right:718px;top:511.25px;height:13.333px;line-height:13.333px;font-size:10px;color:#ef5350">-824</div>
<div class="r" style="right:585px;top:511.25px;height:13.333px;line-height:13.333px;font-size:10px;color:#dedede">11,989</div>
<div class="r" style="right:451px;top:511.25px;height:13.333px;line-height:13.333px;font-size:10px;color:#ef5350">-4,721</div>
<div class="r" style="right:305px;top:511.25px;height:13.333px;line-height:13.333px;font-size:10px;color:#dedede">3,634</div>
<div class="r" style="right:166px;top:511.25px;height:13.333px;line-height:13.333px;font-size:10px;color:#dedede">8,355</div>
<div class="r" style="right:13px;top:511.25px;height:13.333px;line-height:13.333px;font-size:10px;color:#ef5350">-0.76%</div>
<div class="a" style="left:217.00px;top:523.99px;width:1.00px;height:12.1px;background:#f45656"></div>
<div class="r" style="right:1149px;top:524.59px;height:13.333px;line-height:13.333px;font-size:10px;color:#d4d4d4">6,035.00</div>
<div class="r" style="right:852px;top:524.59px;height:13.333px;line-height:13.333px;font-size:10px;color:#4cc56d">284,477</div>
<div class="r" style="right:718px;top:524.59px;height:13.333px;line-height:13.333px;font-size:10px;color:#ef5350">-71</div>
<div class="r" style="right:585px;top:524.59px;height:13.333px;line-height:13.333px;font-size:10px;color:#dedede">8,514</div>
<div class="r" style="right:451px;top:524.59px;height:13.333px;line-height:13.333px;font-size:10px;color:#4cc56d">722</div>
<div class="r" style="right:305px;top:524.59px;height:13.333px;line-height:13.333px;font-size:10px;color:#dedede">4,618</div>
<div class="r" style="right:166px;top:524.59px;height:13.333px;line-height:13.333px;font-size:10px;color:#dedede">3,896</div>
<div class="r" style="right:13px;top:524.59px;height:13.333px;line-height:13.333px;font-size:10px;color:#ef5350">-0.84%</div>
<div class="a" style="left:212.86px;top:537.32px;width:5.14px;height:12.1px;background:#f45656"></div>
<div class="r" style="right:1149px;top:537.92px;height:13.333px;line-height:13.333px;font-size:10px;color:#d4d4d4">6,030.00</div>
<div class="r" style="right:852px;top:537.92px;height:13.333px;line-height:13.333px;font-size:10px;color:#4cc56d">117,698</div>
<div class="r" style="right:718px;top:537.92px;height:13.333px;line-height:13.333px;font-size:10px;color:#ef5350">-884</div>
<div class="r" style="right:585px;top:537.92px;height:13.333px;line-height:13.333px;font-size:10px;color:#dedede">11,534</div>
<div class="r" style="right:451px;top:537.92px;height:13.333px;line-height:13.333px;font-size:10px;color:#ef5350">-4,478</div>
<div class="r" style="right:305px;top:537.92px;height:13.333px;line-height:13.333px;font-size:10px;color:#dedede">3,528</div>
<div class="r" style="right:166px;top:537.92px;height:13.333px;line-height:13.333px;font-size:10px;color:#dedede">8,006</div>
<div class="r" style="right:13px;top:537.92px;height:13.333px;line-height:13.333px;font-size:10px;color:#ef5350">-0.92%</div>
<div class="a" style="left:210.93px;top:550.65px;width:7.07px;height:12.1px;background:#f45656"></div>
<div class="r" style="right:1149px;top:551.25px;height:13.333px;line-height:13.333px;font-size:10px;color:#d4d4d4">6,025.00</div>
<div class="r" style="right:852px;top:551.25px;height:13.333px;line-height:13.333px;font-size:10px;color:#4cc56d">218,252</div>
<div class="r" style="right:718px;top:551.25px;height:13.333px;line-height:13.333px;font-size:10px;color:#ef5350">-1,245</div>
<div class="r" style="right:585px;top:551.25px;height:13.333px;line-height:13.333px;font-size:10px;color:#dedede">18,068</div>
<div class="r" style="right:451px;top:551.25px;height:13.333px;line-height:13.333px;font-size:10px;color:#ef5350">-5,860</div>
<div class="r" style="right:305px;top:551.25px;height:13.333px;line-height:13.333px;font-size:10px;color:#dedede">6,104</div>
<div class="r" style="right:166px;top:551.25px;height:13.333px;line-height:13.333px;font-size:10px;color:#dedede">11,964</div>
<div class="r" style="right:13px;top:551.25px;height:13.333px;line-height:13.333px;font-size:10px;color:#ef5350">-1.01%</div>
<div class="a" style="left:215.57px;top:563.99px;width:2.43px;height:12.1px;background:#f45656"></div>
<div class="r" style="right:1149px;top:564.59px;height:13.333px;line-height:13.333px;font-size:10px;color:#d4d4d4">6,020.00</div>
<div class="r" style="right:852px;top:564.59px;height:13.333px;line-height:13.333px;font-size:10px;color:#ef5350">-96,983</div>
<div class="r" style="right:718px;top:564.59px;height:13.333px;line-height:13.333px;font-size:10px;color:#ef5350">-378</div>
<div class="r" style="right:585px;top:564.59px;height:13.333px;line-height:13.333px;font-size:10px;color:#dedede">3,650</div>
<div class="r" style="right:451px;top:564.59px;height:13.333px;line-height:13.333px;font-size:10px;color:#ef5350">-6,514</div>
<div class="r" style="right:305px;top:564.59px;height:13.333px;line-height:13.333px;font-size:10px;color:#dedede">-1,432</div>
<div class="r" style="right:166px;top:564.59px;height:13.333px;line-height:13.333px;font-size:10px;color:#dedede">5,082</div>
<div class="r" style="right:13px;top:564.59px;height:13.333px;line-height:13.333px;font-size:10px;color:#ef5350">-1.09%</div>
<div class="a" style="left:213.00px;top:577.32px;width:5.00px;height:12.1px;background:#f45656"></div>
<div class="r" style="right:1149px;top:577.92px;height:13.333px;line-height:13.333px;font-size:10px;color:#d4d4d4">6,015.00</div>
<div class="r" style="right:852px;top:577.92px;height:13.333px;line-height:13.333px;font-size:10px;color:#4cc56d">67,442</div>
<div class="r" style="right:718px;top:577.92px;height:13.333px;line-height:13.333px;font-size:10px;color:#ef5350">-859</div>
<div class="r" style="right:585px;top:577.92px;height:13.333px;line-height:13.333px;font-size:10px;color:#dedede">9,211</div>
<div class="r" style="right:451px;top:577.92px;height:13.333px;line-height:13.333px;font-size:10px;color:#ef5350">-6,463</div>
<div class="r" style="right:305px;top:577.92px;height:13.333px;line-height:13.333px;font-size:10px;color:#dedede">1,374</div>
<div class="r" style="right:166px;top:577.92px;height:13.333px;line-height:13.333px;font-size:10px;color:#dedede">7,837</div>
<div class="r" style="right:13px;top:577.92px;height:13.333px;line-height:13.333px;font-size:10px;color:#ef5350">-1.17%</div>
<div class="a" style="left:215.71px;top:590.65px;width:2.29px;height:12.1px;background:#f45656"></div>
<div class="r" style="right:1149px;top:591.25px;height:13.333px;line-height:13.333px;font-size:10px;color:#d4d4d4">6,010.00</div>
<div class="r" style="right:852px;top:591.25px;height:13.333px;line-height:13.333px;font-size:10px;color:#4cc56d">96,911</div>
<div class="r" style="right:718px;top:591.25px;height:13.333px;line-height:13.333px;font-size:10px;color:#ef5350">-353</div>
<div class="r" style="right:585px;top:591.25px;height:13.333px;line-height:13.333px;font-size:10px;color:#dedede">7,057</div>
<div class="r" style="right:451px;top:591.25px;height:13.333px;line-height:13.333px;font-size:10px;color:#ef5350">-3,217</div>
<div class="r" style="right:305px;top:591.25px;height:13.333px;line-height:13.333px;font-size:10px;color:#dedede">1,920</div>
<div class="r" style="right:166px;top:591.25px;height:13.333px;line-height:13.333px;font-size:10px;color:#dedede">5,137</div>
<div class="r" style="right:13px;top:591.25px;height:13.333px;line-height:13.333px;font-size:10px;color:#ef5350">-1.25%</div>
<div class="a" style="left:218px;top:603.99px;width:1.00px;height:12.1px;background:#3dd572"></div>
<div class="r" style="right:1149px;top:604.59px;height:13.333px;line-height:13.333px;font-size:10px;color:#d4d4d4">6,005.00</div>
<div class="r" style="right:852px;top:604.59px;height:13.333px;line-height:13.333px;font-size:10px;color:#4cc56d">157,580</div>
<div class="r" style="right:718px;top:604.59px;height:13.333px;line-height:13.333px;font-size:10px;color:#4cc56d">77</div>
<div class="r" style="right:585px;top:604.59px;height:13.333px;line-height:13.333px;font-size:10px;color:#dedede">5,876</div>
<div class="r" style="right:451px;top:604.59px;height:13.333px;line-height:13.333px;font-size:10px;color:#ef5350">-1,622</div>
<div class="r" style="right:305px;top:604.59px;height:13.333px;line-height:13.333px;font-size:10px;color:#dedede">2,127</div>
<div class="r" style="right:166px;top:604.59px;height:13.333px;line-height:13.333px;font-size:10px;color:#dedede">3,749</div>
<div class="r" style="right:13px;top:604.59px;height:13.333px;line-height:13.333px;font-size:10px;color:#ef5350">-1.33%</div>
<div class="a" style="left:608px;top:617.32px;width:552px;height:13.333px;background:#5f05dc"></div>
<div class="a" style="left:217.00px;top:617.32px;width:1.00px;height:12.1px;background:#f45656"></div>
<div class="r" style="right:1149px;top:617.92px;height:13.333px;line-height:13.333px;font-size:10px;color:#d4d4d4">6,000.00</div>
<div class="r" style="right:852px;top:617.92px;height:13.333px;line-height:13.333px;font-size:10px;color:#4cc56d">2,807,613</div>
<div class="r" style="right:718px;top:617.92px;height:13.333px;line-height:13.333px;font-size:10px;color:#ef5350">-86</div>
<div class="r" style="right:585px;top:617.92px;height:13.333px;line-height:13.333px;font-size:10px;color:#dedede">91,241</div>
<div class="r" style="right:451px;top:617.92px;height:13.333px;line-height:13.333px;font-size:10px;color:#ef5350">-417</div>
<div class="r" style="right:305px;top:617.92px;height:13.333px;line-height:13.333px;font-size:10px;color:#dedede">45,412</div>
<div class="r" style="right:166px;top:617.92px;height:13.333px;line-height:13.333px;font-size:10px;color:#dedede">45,829</div>
<div class="r" style="right:13px;top:617.92px;height:13.333px;line-height:13.333px;font-size:10px;color:#ef5350">-1.42%</div>
<div class="a" style="left:218px;top:630.65px;width:1.00px;height:12.1px;background:#3dd572"></div>
<div class="r" style="right:1149px;top:631.25px;height:13.333px;line-height:13.333px;font-size:10px;color:#d4d4d4">5,995.00</div>
<div class="r" style="right:852px;top:631.25px;height:13.333px;line-height:13.333px;font-size:10px;color:#4cc56d">99,631</div>
<div class="r" style="right:718px;top:631.25px;height:13.333px;line-height:13.333px;font-size:10px;color:#4cc56d">66</div>
<div class="r" style="right:585px;top:631.25px;height:13.333px;line-height:13.333px;font-size:10px;color:#dedede">3,070</div>
<div class="r" style="right:451px;top:631.25px;height:13.333px;line-height:13.333px;font-size:10px;color:#ef5350">-916</div>
<div class="r" style="right:305px;top:631.25px;height:13.333px;line-height:13.333px;font-size:10px;color:#dedede">1,077</div>
<div class="r" style="right:166px;top:631.25px;height:13.333px;line-height:13.333px;font-size:10px;color:#dedede">1,993</div>
<div class="r" style="right:13px;top:631.25px;height:13.333px;line-height:13.333px;font-size:10px;color:#ef5350">-1.50%</div>
<div class="a" style="left:213.48px;top:643.98px;width:4.52px;height:12.1px;background:#f45656"></div>
<div class="r" style="right:1149px;top:644.58px;height:13.333px;line-height:13.333px;font-size:10px;color:#d4d4d4">5,990.00</div>
<div class="r" style="right:852px;top:644.58px;height:13.333px;line-height:13.333px;font-size:10px;color:#4cc56d">143,760</div>
<div class="r" style="right:718px;top:644.58px;height:13.333px;line-height:13.333px;font-size:10px;color:#ef5350">-769</div>
<div class="r" style="right:585px;top:644.58px;height:13.333px;line-height:13.333px;font-size:10px;color:#dedede">12,081</div>
<div class="r" style="right:451px;top:644.58px;height:13.333px;line-height:13.333px;font-size:10px;color:#ef5350">-6,211</div>
<div class="r" style="right:305px;top:644.58px;height:13.333px;line-height:13.333px;font-size:10px;color:#dedede">2,935</div>
<div class="r" style="right:166px;top:644.58px;height:13.333px;line-height:13.333px;font-size:10px;color:#dedede">9,146</div>
<div class="r" style="right:13px;top:644.58px;height:13.333px;line-height:13.333px;font-size:10px;color:#ef5350">-1.58%</div>
<div class="a" style="left:214.94px;top:657.32px;width:3.06px;height:12.1px;background:#f45656"></div>
<div class="r" style="right:1149px;top:657.92px;height:13.333px;line-height:13.333px;font-size:10px;color:#d4d4d4">5,985.00</div>
<div class="r" style="right:852px;top:657.92px;height:13.333px;line-height:13.333px;font-size:10px;color:#4cc56d">14,783</div>
<div class="r" style="right:718px;top:657.92px;height:13.333px;line-height:13.333px;font-size:10px;color:#ef5350">-496</div>
<div class="r" style="right:585px;top:657.92px;height:13.333px;line-height:13.333px;font-size:10px;color:#dedede">6,824</div>
<div class="r" style="right:451px;top:657.92px;height:13.333px;line-height:13.333px;font-size:10px;color:#ef5350">-5,248</div>
<div class="r" style="right:305px;top:657.92px;height:13.333px;line-height:13.333px;font-size:10px;color:#dedede">788</div>
<div class="r" style="right:166px;top:657.92px;height:13.333px;line-height:13.333px;font-size:10px;color:#dedede">6,036</div>
<div class="r" style="right:13px;top:657.92px;height:13.333px;line-height:13.333px;font-size:10px;color:#ef5350">-1.66%</div>
<div class="a" style="left:214.57px;top:670.65px;width:3.43px;height:12.1px;background:#f45656"></div>
<div class="r" style="right:1149px;top:671.25px;height:13.333px;line-height:13.333px;font-size:10px;color:#d4d4d4">5,980.00</div>
<div class="r" style="right:852px;top:671.25px;height:13.333px;line-height:13.333px;font-size:10px;color:#4cc56d">293,794</div>
<div class="r" style="right:718px;top:671.25px;height:13.333px;line-height:13.333px;font-size:10px;color:#ef5350">-566</div>
<div class="r" style="right:585px;top:671.25px;height:13.333px;line-height:13.333px;font-size:10px;color:#dedede">14,601</div>
<div class="r" style="right:451px;top:671.25px;height:13.333px;line-height:13.333px;font-size:10px;color:#ef5350">-5,933</div>
<div class="r" style="right:305px;top:671.25px;height:13.333px;line-height:13.333px;font-size:10px;color:#dedede">4,334</div>
<div class="r" style="right:166px;top:671.25px;height:13.333px;line-height:13.333px;font-size:10px;color:#dedede">10,267</div>
<div class="r" style="right:13px;top:671.25px;height:13.333px;line-height:13.333px;font-size:10px;color:#ef5350">-1.75%</div>
<div class="a" style="left:218px;top:683.98px;width:1.40px;height:12.1px;background:#3dd572"></div>
<div class="r" style="right:1149px;top:684.58px;height:13.333px;line-height:13.333px;font-size:10px;color:#d4d4d4">5,975.00</div>
<div class="r" style="right:852px;top:684.58px;height:13.333px;line-height:13.333px;font-size:10px;color:#4cc56d">340,771</div>
<div class="r" style="right:718px;top:684.58px;height:13.333px;line-height:13.333px;font-size:10px;color:#4cc56d">187</div>
<div class="r" style="right:585px;top:684.58px;height:13.333px;line-height:13.333px;font-size:10px;color:#dedede">9,393</div>
<div class="r" style="right:451px;top:684.58px;height:13.333px;line-height:13.333px;font-size:10px;color:#ef5350">-251</div>
<div class="r" style="right:305px;top:684.58px;height:13.333px;line-height:13.333px;font-size:10px;color:#dedede">4,571</div>
<div class="r" style="right:166px;top:684.58px;height:13.333px;line-height:13.333px;font-size:10px;color:#dedede">4,822</div>
<div class="r" style="right:13px;top:684.58px;height:13.333px;line-height:13.333px;font-size:10px;color:#ef5350">-1.83%</div>
<div class="a" style="left:211.21px;top:697.32px;width:6.79px;height:12.1px;background:#f45656"></div>
<div class="r" style="right:1149px;top:697.92px;height:13.333px;line-height:13.333px;font-size:10px;color:#d4d4d4">5,970.00</div>
<div class="r" style="right:852px;top:697.92px;height:13.333px;line-height:13.333px;font-size:10px;color:#4cc56d">44,975</div>
<div class="r" style="right:718px;top:697.92px;height:13.333px;line-height:13.333px;font-size:10px;color:#ef5350">-1,192</div>
<div class="r" style="right:585px;top:697.92px;height:13.333px;line-height:13.333px;font-size:10px;color:#dedede">12,276</div>
<div class="r" style="right:451px;top:697.92px;height:13.333px;line-height:13.333px;font-size:10px;color:#ef5350">-8,926</div>
<div class="r" style="right:305px;top:697.92px;height:13.333px;line-height:13.333px;font-size:10px;color:#dedede">1,675</div>
<div class="r" style="right:166px;top:697.92px;height:13.333px;line-height:13.333px;font-size:10px;color:#dedede">10,601</div>
<div class="r" style="right:13px;top:697.92px;height:13.333px;line-height:13.333px;font-size:10px;color:#ef5350">-1.91%</div>
<div class="a" style="left:216.79px;top:710.65px;width:1.21px;height:12.1px;background:#f45656"></div>
<div class="r" style="right:1149px;top:711.25px;height:13.333px;line-height:13.333px;font-size:10px;color:#d4d4d4">5,965.00</div>
<div class="r" style="right:852px;top:711.25px;height:13.333px;line-height:13.333px;font-size:10px;color:#4cc56d">89,329</div>
<div class="r" style="right:718px;top:711.25px;height:13.333px;line-height:13.333px;font-size:10px;color:#ef5350">-152</div>
<div class="r" style="right:585px;top:711.25px;height:13.333px;line-height:13.333px;font-size:10px;color:#dedede">7,092</div>
<div class="r" style="right:451px;top:711.25px;height:13.333px;line-height:13.333px;font-size:10px;color:#ef5350">-4,378</div>
<div class="r" style="right:305px;top:711.25px;height:13.333px;line-height:13.333px;font-size:10px;color:#dedede">1,357</div>
<div class="r" style="right:166px;top:711.25px;height:13.333px;line-height:13.333px;font-size:10px;color:#dedede">5,735</div>
<div class="r" style="right:13px;top:711.25px;height:13.333px;line-height:13.333px;font-size:10px;color:#ef5350">-1.99%</div>
<div class="a" style="left:218px;top:723.98px;width:3.51px;height:12.1px;background:#3dd572"></div>
<div class="r" style="right:1149px;top:724.58px;height:13.333px;line-height:13.333px;font-size:10px;color:#d4d4d4">5,960.00</div>
<div class="r" style="right:852px;top:724.58px;height:13.333px;line-height:13.333px;font-size:10px;color:#4cc56d">360,905</div>
<div class="r" style="right:718px;top:724.58px;height:13.333px;line-height:13.333px;font-size:10px;color:#4cc56d">581</div>
<div class="r" style="right:585px;top:724.58px;height:13.333px;line-height:13.333px;font-size:10px;color:#dedede">7,268</div>
<div class="r" style="right:451px;top:724.58px;height:13.333px;line-height:13.333px;font-size:10px;color:#4cc56d">1,606</div>
<div class="r" style="right:305px;top:724.58px;height:13.333px;line-height:13.333px;font-size:10px;color:#dedede">4,437</div>
<div class="r" style="right:166px;top:724.58px;height:13.333px;line-height:13.333px;font-size:10px;color:#dedede">2,831</div>
<div class="r" style="right:13px;top:724.58px;height:13.333px;line-height:13.333px;font-size:10px;color:#ef5350">-2.07%</div>
<div class="a" style="left:216.76px;top:737.32px;width:1.24px;height:12.1px;background:#f45656"></div>
<div class="r" style="right:1149px;top:737.92px;height:13.333px;line-height:13.333px;font-size:10px;color:#d4d4d4">5,955.00</div>
<div class="r" style="right:852px;top:737.92px;height:13.333px;line-height:13.333px;font-size:10px;color:#ef5350">-41,247</div>
<div class="r" style="right:718px;top:737.92px;height:13.333px;line-height:13.333px;font-size:10px;color:#ef5350">-156</div>
<div class="r" style="right:585px;top:737.92px;height:13.333px;line-height:13.333px;font-size:10px;color:#dedede">856</div>
<div class="r" style="right:451px;top:737.92px;height:13.333px;line-height:13.333px;font-size:10px;color:#ef5350">-2,024</div>
<div class="r" style="right:305px;top:737.92px;height:13.333px;line-height:13.333px;font-size:10px;color:#dedede">-584</div>
<div class="r" style="right:166px;top:737.92px;height:13.333px;line-height:13.333px;font-size:10px;color:#dedede">1,440</div>
<div class="r" style="right:13px;top:737.92px;height:13.333px;line-height:13.333px;font-size:10px;color:#ef5350">-2.16%</div>
<div class="a" style="left:216.94px;top:750.65px;width:1.06px;height:12.1px;background:#f45656"></div>
<div class="r" style="right:1149px;top:751.25px;height:13.333px;line-height:13.333px;font-size:10px;color:#d4d4d4">5,950.00</div>
<div class="r" style="right:852px;top:751.25px;height:13.333px;line-height:13.333px;font-size:10px;color:#4cc56d">11,815</div>
<div class="r" style="right:718px;top:751.25px;height:13.333px;line-height:13.333px;font-size:10px;color:#ef5350">-124</div>
<div class="r" style="right:585px;top:751.25px;height:13.333px;line-height:13.333px;font-size:10px;color:#dedede">30,659</div>
<div class="r" style="right:451px;top:751.25px;height:13.333px;line-height:13.333px;font-size:10px;color:#ef5350">-20,393</div>
<div class="r" style="right:305px;top:751.25px;height:13.333px;line-height:13.333px;font-size:10px;color:#dedede">5,133</div>
<div class="r" style="right:166px;top:751.25px;height:13.333px;line-height:13.333px;font-size:10px;color:#dedede">25,526</div>
<div class="r" style="right:13px;top:751.25px;height:13.333px;line-height:13.333px;font-size:10px;color:#ef5350">-2.24%</div>
<div class="a" style="left:215.21px;top:763.98px;width:2.79px;height:12.1px;background:#f45656"></div>
<div class="r" style="right:1149px;top:764.58px;height:13.333px;line-height:13.333px;font-size:10px;color:#d4d4d4">5,945.00</div>
<div class="r" style="right:852px;top:764.58px;height:13.333px;line-height:13.333px;font-size:10px;color:#ef5350">-99,139</div>
<div class="r" style="right:718px;top:764.58px;height:13.333px;line-height:13.333px;font-size:10px;color:#ef5350">-446</div>
<div class="r" style="right:585px;top:764.58px;height:13.333px;line-height:13.333px;font-size:10px;color:#dedede">1,563</div>
<div class="r" style="right:451px;top:764.58px;height:13.333px;line-height:13.333px;font-size:10px;color:#ef5350">-3,523</div>
<div class="r" style="right:305px;top:764.58px;height:13.333px;line-height:13.333px;font-size:10px;color:#dedede">-980</div>
<div class="r" style="right:166px;top:764.58px;height:13.333px;line-height:13.333px;font-size:10px;color:#dedede">2,543</div>
<div class="r" style="right:13px;top:764.58px;height:13.333px;line-height:13.333px;font-size:10px;color:#ef5350">-2.32%</div>
<div class="a" style="left:217.00px;top:777.31px;width:1.00px;height:12.1px;background:#f45656"></div>
<div class="r" style="right:1149px;top:777.91px;height:13.333px;line-height:13.333px;font-size:10px;color:#d4d4d4">5,940.00</div>
<div class="r" style="right:852px;top:777.91px;height:13.333px;line-height:13.333px;font-size:10px;color:#4cc56d">150,978</div>
<div class="r" style="right:718px;top:777.91px;height:13.333px;line-height:13.333px;font-size:10px;color:#ef5350">-73</div>
<div class="r" style="right:585px;top:777.91px;height:13.333px;line-height:13.333px;font-size:10px;color:#dedede">7,536</div>
<div class="r" style="right:451px;top:777.91px;height:13.333px;line-height:13.333px;font-size:10px;color:#ef5350">-3,090</div>
<div class="r" style="right:305px;top:777.91px;height:13.333px;line-height:13.333px;font-size:10px;color:#dedede">2,223</div>
<div class="r" style="right:166px;top:777.91px;height:13.333px;line-height:13.333px;font-size:10px;color:#dedede">5,313</div>
<div class="r" style="right:13px;top:777.91px;height:13.333px;line-height:13.333px;font-size:10px;color:#ef5350">-2.40%</div>
<div class="a" style="left:218px;top:790.65px;width:2.35px;height:12.1px;background:#3dd572"></div>
<div class="r" style="right:1149px;top:791.25px;height:13.333px;line-height:13.333px;font-size:10px;color:#d4d4d4">5,935.00</div>
<div class="r" style="right:852px;top:791.25px;height:13.333px;line-height:13.333px;font-size:10px;color:#4cc56d">97,620</div>
<div class="r" style="right:718px;top:791.25px;height:13.333px;line-height:13.333px;font-size:10px;color:#4cc56d">364</div>
<div class="r" style="right:585px;top:791.25px;height:13.333px;line-height:13.333px;font-size:10px;color:#dedede">3,073</div>
<div class="r" style="right:451px;top:791.25px;height:13.333px;line-height:13.333px;font-size:10px;color:#ef5350">-1,639</div>
<div class="r" style="right:305px;top:791.25px;height:13.333px;line-height:13.333px;font-size:10px;color:#dedede">717</div>
<div class="r" style="right:166px;top:791.25px;height:13.333px;line-height:13.333px;font-size:10px;color:#dedede">2,356</div>
<div class="r" style="right:13px;top:791.25px;height:13.333px;line-height:13.333px;font-size:10px;color:#ef5350">-2.48%</div>
<div class="a" style="left:216.34px;top:803.98px;width:1.66px;height:12.1px;background:#f45656"></div>
<div class="r" style="right:1149px;top:804.58px;height:13.333px;line-height:13.333px;font-size:10px;color:#d4d4d4">5,930.00</div>
<div class="r" style="right:852px;top:804.58px;height:13.333px;line-height:13.333px;font-size:10px;color:#4cc56d">49,709</div>
<div class="r" style="right:718px;top:804.58px;height:13.333px;line-height:13.333px;font-size:10px;color:#ef5350">-236</div>
<div class="r" style="right:585px;top:804.58px;height:13.333px;line-height:13.333px;font-size:10px;color:#dedede">5,865</div>
<div class="r" style="right:451px;top:804.58px;height:13.333px;line-height:13.333px;font-size:10px;color:#ef5350">-3,957</div>
<div class="r" style="right:305px;top:804.58px;height:13.333px;line-height:13.333px;font-size:10px;color:#dedede">954</div>
<div class="r" style="right:166px;top:804.58px;height:13.333px;line-height:13.333px;font-size:10px;color:#dedede">4,911</div>
<div class="r" style="right:13px;top:804.58px;height:13.333px;line-height:13.333px;font-size:10px;color:#ef5350">-2.57%</div>
</div>
<div class="a" style="left:94px;top:445px;width:10px;height:10px;border-radius:50%;background:#3ecf6c"></div>
<div class="a" style="left:93.7px;top:564.7px;width:10.6px;height:10.6px;border-radius:50%;background:#f45a5a"></div>
<div class="a" style="left:1053px;top:446.5px;width:10px;height:10px;border-radius:50%;background:#3ecf6c"></div>
<div class="a" style="left:89px;top:512px;width:1299.5px;height:25.6px;border:1.2px solid #f2f2f2"></div>
<div class="a" style="left:1418px;top:66.5px;width:202px;height:129.5px;background:#1f2025;border-radius:3px;box-shadow:0 -1px 1px rgba(0,0,0,.3)"></div>
<div class="t" style="left:1431.40px;top:83.53px;font-size:10.6px;font-weight:bold;color:#f2f2f2">Gamma, OI, and Others</div>
<div class="t" style="left:1431.40px;top:111.96px;font-size:9.5px;color:#7e8087">Net Gamma $</div>
<div class="t" style="left:1431.40px;top:126.21px;font-size:10.5px;color:#ececec;-webkit-text-stroke:0.15px #ececec">571,225,212</div>
<div class="t" style="left:1532.90px;top:111.96px;font-size:9.5px;color:#7e8087">Total OI</div>
<div class="t" style="left:1532.90px;top:126.21px;font-size:10.5px;color:#ececec;-webkit-text-stroke:0.15px #ececec">3,713,961</div>
<div class="t" style="left:1431.40px;top:155.06px;font-size:9.5px;color:#7e8087">COTMP</div>
<div class="t" style="left:1431.40px;top:169.51px;font-size:10.5px;color:#ececec;-webkit-text-stroke:0.15px #ececec">6,090.53</div>
<div class="t" style="left:1532.90px;top:155.06px;font-size:9.5px;color:#7e8087">COTMC</div>
<div class="t" style="left:1532.90px;top:169.51px;font-size:10.5px;color:#ececec;-webkit-text-stroke:0.15px #ececec">6,118.41</div>
<div class="a" style="left:1418px;top:202px;width:202px;height:86px;background:#1f2025;border-radius:3px;box-shadow:0 -1px 1px rgba(0,0,0,.3)"></div>
<div class="t" style="left:1431.30px;top:217.19px;font-size:11px;font-weight:bold;color:#f2f2f2">Expected Move: 0.40% | 25pts</div>
<div class="t" style="left:1431.30px;top:247.36px;font-size:9.5px;color:#7e8087">Bottom</div>
<div class="t" style="left:1431.30px;top:261.01px;font-size:10.5px;color:#ececec;-webkit-text-stroke:0.15px #ececec">6,061.70</div>
<div class="t" style="left:1498.80px;top:247.36px;font-size:9.5px;color:#7e8087">Spot</div>
<div class="t" style="left:1498.80px;top:261.01px;font-size:10.5px;color:#ececec;-webkit-text-stroke:0.15px #ececec">6,086.23</div>
<div class="t" style="left:1566.20px;top:247.36px;font-size:9.5px;color:#7e8087">Top</div>
<div class="t" style="left:1566.20px;top:261.01px;font-size:10.5px;color:#ececec;-webkit-text-stroke:0.15px #ececec">6,110.75</div>
<div class="a" style="left:1418px;top:293px;width:202px;height:51px;background:#5f05dc;border-radius:3px;box-shadow:0 -1px 1px rgba(0,0,0,.3)"></div>
<div class="t" style="left:1432.00px;top:303.58px;font-size:9px;color:#eadcff">Gamma Condition</div>
<div class="t" style="left:1432.00px;top:317.43px;font-size:13.2px;font-weight:bold;color:#f6eeff">Call Dominated</div>
<div class="a" style="left:1418px;top:349px;width:202px;height:258px;background:#1f2025;border-radius:3px;box-shadow:0 -1px 1px rgba(0,0,0,.3)"></div>
<div class="t" style="left:1431.00px;top:365.51px;font-size:10.5px;font-weight:bold;color:#f2f2f2">GEX Indicators</div>
<div class="t" style="left:1431.00px;top:394.36px;font-size:9.5px;color:#7e8087">+GEX Supply</div>
<div class="t" style="left:1431.00px;top:408.51px;font-size:10.5px;color:#ececec;-webkit-text-stroke:0.15px #ececec">6,100.00</div>
<div class="t" style="left:1532.30px;top:394.36px;font-size:9.5px;color:#7e8087">-GEX Demand</div>
<div class="t" style="left:1532.30px;top:408.51px;font-size:10.5px;color:#ececec;-webkit-text-stroke:0.15px #ececec">6,055.00</div>
<div class="t" style="left:1431.00px;top:437.36px;font-size:9.5px;color:#7e8087">Net GEX</div>
<div class="t" style="left:1431.00px;top:451.51px;font-size:10.5px;color:#ececec;-webkit-text-stroke:0.15px #ececec">93.86K</div>
<div class="t" style="left:1431.00px;top:480.36px;font-size:9.5px;color:#7e8087">Spot Last Updated</div>
<div class="t" style="left:1431.00px;top:493.33px;font-size:11.3px;color:#ececec;-webkit-text-stroke:0.15px #ececec">12/4/2024, 3:59:00 PM EST</div>
<div class="t" style="left:1431.00px;top:523.96px;font-size:9.5px;color:#7e8087">Greeks Last Updated</div>
<div class="t" style="left:1431.00px;top:537.23px;font-size:11.3px;color:#ececec;-webkit-text-stroke:0.15px #ececec">12/5/2024, 8:40:43 AM EST</div>
<div class="t" style="left:1431.00px;top:566.96px;font-size:9.5px;color:#7e8087">OI Last Updated</div>
<div class="t" style="left:1431.00px;top:579.93px;font-size:11.3px;color:#ececec;-webkit-text-stroke:0.15px #ececec">12/5/2024, 6:30:44 AM EST</div>
<div class="a" style="left:1418px;top:614px;width:202px;height:316px;background:#1f2025;border-radius:3px;box-shadow:0 -1px 1px rgba(0,0,0,.3)"></div>
<div class="t" style="left:1434.00px;top:627.01px;font-size:10.5px;font-weight:bold;color:#f2f2f2">Net GEX by Expiration</div>
<svg class="a" style="left:0;top:0" width="1920" height="911" viewBox="0 0 1920 911"><path d="M 1519 751.5 L 1599.50 751.50 A 80.5 80.5 0 0 1 1526.86 831.62 Z" fill="#1fb3d7" stroke="#1fb3d7" stroke-width="0.4"/><path d="M 1519 751.5 L 1526.86 831.62 A 80.5 80.5 0 0 1 1456.18 801.83 Z" fill="#2e9f3e" stroke="#2e9f3e" stroke-width="0.4"/><path d="M 1519 751.5 L 1456.18 801.83 A 80.5 80.5 0 0 1 1438.54 749.11 Z" fill="#4a81e8" stroke="#4a81e8" stroke-width="0.4"/><path d="M 1519 751.5 L 1438.54 749.11 A 80.5 80.5 0 0 1 1449.08 711.62 Z" fill="#5a0ad8" stroke="#5a0ad8" stroke-width="0.4"/><path d="M 1519 751.5 L 1449.08 711.62 A 80.5 80.5 0 0 1 1465.98 690.93 Z" fill="#6dbf7b" stroke="#6dbf7b" stroke-width="0.4"/><path d="M 1519 751.5 L 1465.98 690.93 A 80.5 80.5 0 0 1 1486.77 677.73 Z" fill="#b87af0" stroke="#b87af0" stroke-width="0.4"/><path d="M 1519 751.5 L 1486.77 677.73 A 80.5 80.5 0 0 1 1500.07 673.26 Z" fill="#c18878" stroke="#c18878" stroke-width="0.4"/><path d="M 1519 751.5 L 1500.07 673.26 A 80.5 80.5 0 0 1 1514.65 671.12 Z" fill="#e9c6b2" stroke="#e9c6b2" stroke-width="0.4"/><path d="M 1519 751.5 L 1514.65 671.12 A 80.5 80.5 0 0 1 1527.00 671.40 Z" fill="#fce6bf" stroke="#fce6bf" stroke-width="0.4"/><path d="M 1519 751.5 L 1527.00 671.40 A 80.5 80.5 0 0 1 1540.11 673.82 Z" fill="#ff7a52" stroke="#ff7a52" stroke-width="0.4"/><path d="M 1519 751.5 L 1540.11 673.82 A 80.5 80.5 0 0 1 1551.49 677.85 Z" fill="#ffa78b" stroke="#ffa78b" stroke-width="0.4"/><path d="M 1519 751.5 L 1551.49 677.85 A 80.5 80.5 0 0 1 1561.54 683.16 Z" fill="#ffc21c" stroke="#ffc21c" stroke-width="0.4"/><path d="M 1519 751.5 L 1561.54 683.16 A 80.5 80.5 0 0 1 1567.67 687.38 Z" fill="#ffd56b" stroke="#ffd56b" stroke-width="0.4"/><path d="M 1519 751.5 L 1567.67 687.38 A 80.5 80.5 0 0 1 1574.51 693.20 Z" fill="#1fb3d7" stroke="#1fb3d7" stroke-width="0.4"/><path d="M 1519 751.5 L 1574.51 693.20 A 80.5 80.5 0 0 1 1578.82 697.63 Z" fill="#2e9f3e" stroke="#2e9f3e" stroke-width="0.4"/><path d="M 1519 751.5 L 1578.82 697.63 A 80.5 80.5 0 0 1 1583.71 703.62 Z" fill="#4a81e8" stroke="#4a81e8" stroke-width="0.4"/><path d="M 1519 751.5 L 1583.71 703.62 A 80.5 80.5 0 0 1 1586.28 707.30 Z" fill="#5a0ad8" stroke="#5a0ad8" stroke-width="0.4"/><path d="M 1519 751.5 L 1586.28 707.30 A 80.5 80.5 0 0 1 1588.72 711.25 Z" fill="#6dbf7b" stroke="#6dbf7b" stroke-width="0.4"/><path d="M 1519 751.5 L 1588.72 711.25 A 80.5 80.5 0 0 1 1591.72 716.97 Z" fill="#b87af0" stroke="#b87af0" stroke-width="0.4"/><path d="M 1519 751.5 L 1591.72 716.97 A 80.5 80.5 0 0 1 1593.48 720.95 Z" fill="#c18878" stroke="#c18878" stroke-width="0.4"/><path d="M 1519 751.5 L 1593.48 720.95 A 80.5 80.5 0 0 1 1594.93 724.76 Z" fill="#e9c6b2" stroke="#e9c6b2" stroke-width="0.4"/><path d="M 1519 751.5 L 1594.93 724.76 A 80.5 80.5 0 0 1 1596.68 730.39 Z" fill="#fce6bf" stroke="#fce6bf" stroke-width="0.4"/><path d="M 1519 751.5 L 1596.68 730.39 A 80.5 80.5 0 0 1 1597.86 735.31 Z" fill="#ff7a52" stroke="#ff7a52" stroke-width="0.4"/><path d="M 1519 751.5 L 1597.86 735.31 A 80.5 80.5 0 0 1 1598.35 737.94 Z" fill="#ffa78b" stroke="#ffa78b" stroke-width="0.4"/><path d="M 1519 751.5 L 1598.35 737.94 A 80.5 80.5 0 0 1 1598.79 740.85 Z" fill="#ffc21c" stroke="#ffc21c" stroke-width="0.4"/><path d="M 1519 751.5 L 1598.79 740.85 A 80.5 80.5 0 0 1 1598.95 742.11 Z" fill="#ffd56b" stroke="#ffd56b" stroke-width="0.4"/><path d="M 1519 751.5 L 1598.95 742.11 A 80.5 80.5 0 0 1 1599.18 744.34 Z" fill="#1fb3d7" stroke="#1fb3d7" stroke-width="0.4"/><path d="M 1519 751.5 L 1599.18 744.34 A 80.5 80.5 0 0 1 1599.32 746.16 Z" fill="#2e9f3e" stroke="#2e9f3e" stroke-width="0.4"/><path d="M 1519 751.5 L 1599.32 746.16 A 80.5 80.5 0 0 1 1599.41 747.71 Z" fill="#4a81e8" stroke="#4a81e8" stroke-width="0.4"/><path d="M 1519 751.5 L 1599.41 747.71 A 80.5 80.5 0 0 1 1599.46 748.83 Z" fill="#5a0ad8" stroke="#5a0ad8" stroke-width="0.4"/><path d="M 1519 751.5 L 1599.46 748.83 A 80.5 80.5 0 0 1 1599.48 749.67 Z" fill="#6dbf7b" stroke="#6dbf7b" stroke-width="0.4"/><path d="M 1519 751.5 L 1599.48 749.67 A 80.5 80.5 0 0 1 1599.49 750.38 Z" fill="#b87af0" stroke="#b87af0" stroke-width="0.4"/><path d="M 1519 751.5 L 1599.49 750.38 A 80.5 80.5 0 0 1 1599.50 750.87 Z" fill="#c18878" stroke="#c18878" stroke-width="0.4"/><path d="M 1519 751.5 L 1599.50 750.87 A 80.5 80.5 0 0 1 1599.50 751.22 Z" fill="#e9c6b2" stroke="#e9c6b2" stroke-width="0.4"/><path d="M 1519 751.5 L 1599.50 751.22 A 80.5 80.5 0 0 1 1599.50 751.50 Z" fill="#fce6bf" stroke="#fce6bf" stroke-width="0.4"/></svg>
<div class="a" style="left:1418px;top:868.6px;width:202px;height:60px;background:#25272e"></div>
<div class="a" style="left:1433.5px;top:877.4px;width:7.2px;height:7.2px;border-radius:50%;background:#1fb3d7"></div>
<div class="t" style="left:1443.50px;top:876.33px;font-size:10px;color:#8b8d94">12/05/2024</div>
<div class="t" style="right:317.00px;top:875.89px;font-size:11px;color:#f0f0f0">23%</div>
<div class="a" style="left:1433.5px;top:893.4px;width:7.2px;height:7.2px;border-radius:50%;background:#2e9f3e"></div>
<div class="t" style="left:1443.50px;top:892.33px;font-size:10px;color:#8b8d94">12/06/2024</div>
<div class="t" style="right:317.00px;top:891.89px;font-size:11px;color:#f0f0f0">16%</div>
<div class="a" style="left:1433.5px;top:909.4px;width:7.2px;height:7.2px;border-radius:50%;background:#4a81e8"></div>
<div class="t" style="left:1443.50px;top:908.33px;font-size:10px;color:#8b8d94">12/09/2024</div>
<div class="t" style="right:317.00px;top:907.89px;font-size:11px;color:#f0f0f0">11%</div>
<div class="a" style="left:1632.3px;top:35px;width:2.5px;height:876px;background:#121317"></div>
<div class="a" style="left:1636px;top:35px;width:1px;height:876px;background:#37383d"></div>
<svg class="a" style="left:1643px;top:41px" width="16" height="16" viewBox="0 0 16 16">
<circle cx="8" cy="8" r="6.8" fill="#8d8d8f"/><path d="M6.8 5.2 L9.4 8 L6.8 10.8" fill="none" stroke="#1f2024" stroke-width="1.6"/></svg>
<svg class="a" style="left:1643px;top:73px" width="16" height="14" viewBox="0 0 16 14">
<path d="M1.5 3.5 H4.5 L6 1.5 H10 L11.5 3.5 H14.5 V12.5 H1.5 Z" fill="#8d8d8f"/><circle cx="8" cy="8" r="2.6" fill="#1f2024"/><circle cx="8" cy="8" r="1.5" fill="#8d8d8f"/></svg>
<div class="a" style="left:1665px;top:0;width:255px;height:911px;background:#1f2025"></div>
<div class="a" style="left:1665px;top:0;width:1px;height:911px;background:#37383d"></div>
<div class="a" style="left:1670px;top:0;width:1px;height:911px;background:#1b1c20"></div>
<div class="t" style="left:1682.00px;top:17.37px;font-size:9.6px;color:#ececec">Filter by <b>Expiry Date</b></div>
<div class="t" style="left:1682.00px;top:50.43px;font-size:8px;color:#e8e8e8;text-decoration:underline;-webkit-text-stroke:0.25px #e8e8e8">Select All</div>
<div class="t" style="left:1724.00px;top:50.43px;font-size:8px;color:#e8e8e8;text-decoration:underline;-webkit-text-stroke:0.25px #e8e8e8">Invert</div>
<div class="btn" style="left:1682px;top:70.0px">12/05/2024</div>
<div class="btn" style="left:1756px;top:70.0px">12/06/2024</div>
<div class="btn" style="left:1830px;top:70.0px">12/09/2024</div>
<div class="btn" style="left:1682px;top:105.4px">12/10/2024</div>
<div class="btn" style="left:1756px;top:105.4px">12/11/2024</div>
<div class="btn" style="left:1830px;top:105.4px">12/12/2024</div>
<div class="btn" style="left:1682px;top:140.8px">12/13/2024</div>
<div class="btn" style="left:1756px;top:140.8px">12/16/2024</div>
<div class="btn" style="left:1830px;top:140.8px">12/17/2024</div>
<div class="btn" style="left:1682px;top:176.1px">12/18/2024</div>
<div class="btn" style="left:1756px;top:176.1px">12/19/2024</div>
<div class="btn" style="left:1830px;top:176.1px">12/20/2024</div>
<div class="btn" style="left:1682px;top:211.5px">12/23/2024</div>
<div class="btn" style="left:1756px;top:211.5px">12/24/2024</div>
<div class="btn" style="left:1830px;top:211.5px">12/26/2024</div>
<div class="btn" style="left:1682px;top:246.9px">12/27/2024</div>
<div class="btn" style="left:1756px;top:246.9px">12/30/2024</div>
<div class="btn" style="left:1830px;top:246.9px">12/31/2024</div>
<div class="btn" style="left:1682px;top:282.3px">01/02/2025</div>
<div class="btn" style="left:1756px;top:282.3px">01/03/2025</div>
<div class="btn" style="left:1830px;top:282.3px">01/06/2025</div>
<div class="btn" style="left:1682px;top:317.7px">01/07/2025</div>
<div class="btn" style="left:1756px;top:317.7px">01/08/2025</div>
<div class="btn" style="left:1830px;top:317.7px">01/09/2025</div>
<div class="btn" style="left:1682px;top:353.0px">01/10/2025</div>
<div class="btn" style="left:1756px;top:353.0px">01/13/2025</div>
<div class="btn" style="left:1830px;top:353.0px">01/15/2025</div>
<div class="btn" style="left:1682px;top:388.4px">01/17/2025</div>
<div class="btn" style="left:1756px;top:388.4px">01/22/2025</div>
<div class="btn" style="left:1830px;top:388.4px">01/24/2025</div>
<div class="btn" style="left:1682px;top:423.8px">01/31/2025</div>
<div class="btn" style="left:1756px;top:423.8px">02/21/2025</div>
<div class="btn" style="left:1830px;top:423.8px">02/28/2025</div>
<div class="btn" style="left:1682px;top:459.2px">03/21/2025</div>
<div class="btn" style="left:1756px;top:459.2px">03/31/2025</div>
<div class="btn" style="left:1830px;top:459.2px">04/17/2025</div>
<div class="btn" style="left:1682px;top:494.6px">04/30/2025</div>
<div class="btn" style="left:1756px;top:494.6px">05/30/2025</div>
<div class="btn" style="left:1830px;top:494.6px">06/30/2025</div>
<div class="btn" style="left:1682px;top:529.9px">09/30/2025</div>
</body></html>
